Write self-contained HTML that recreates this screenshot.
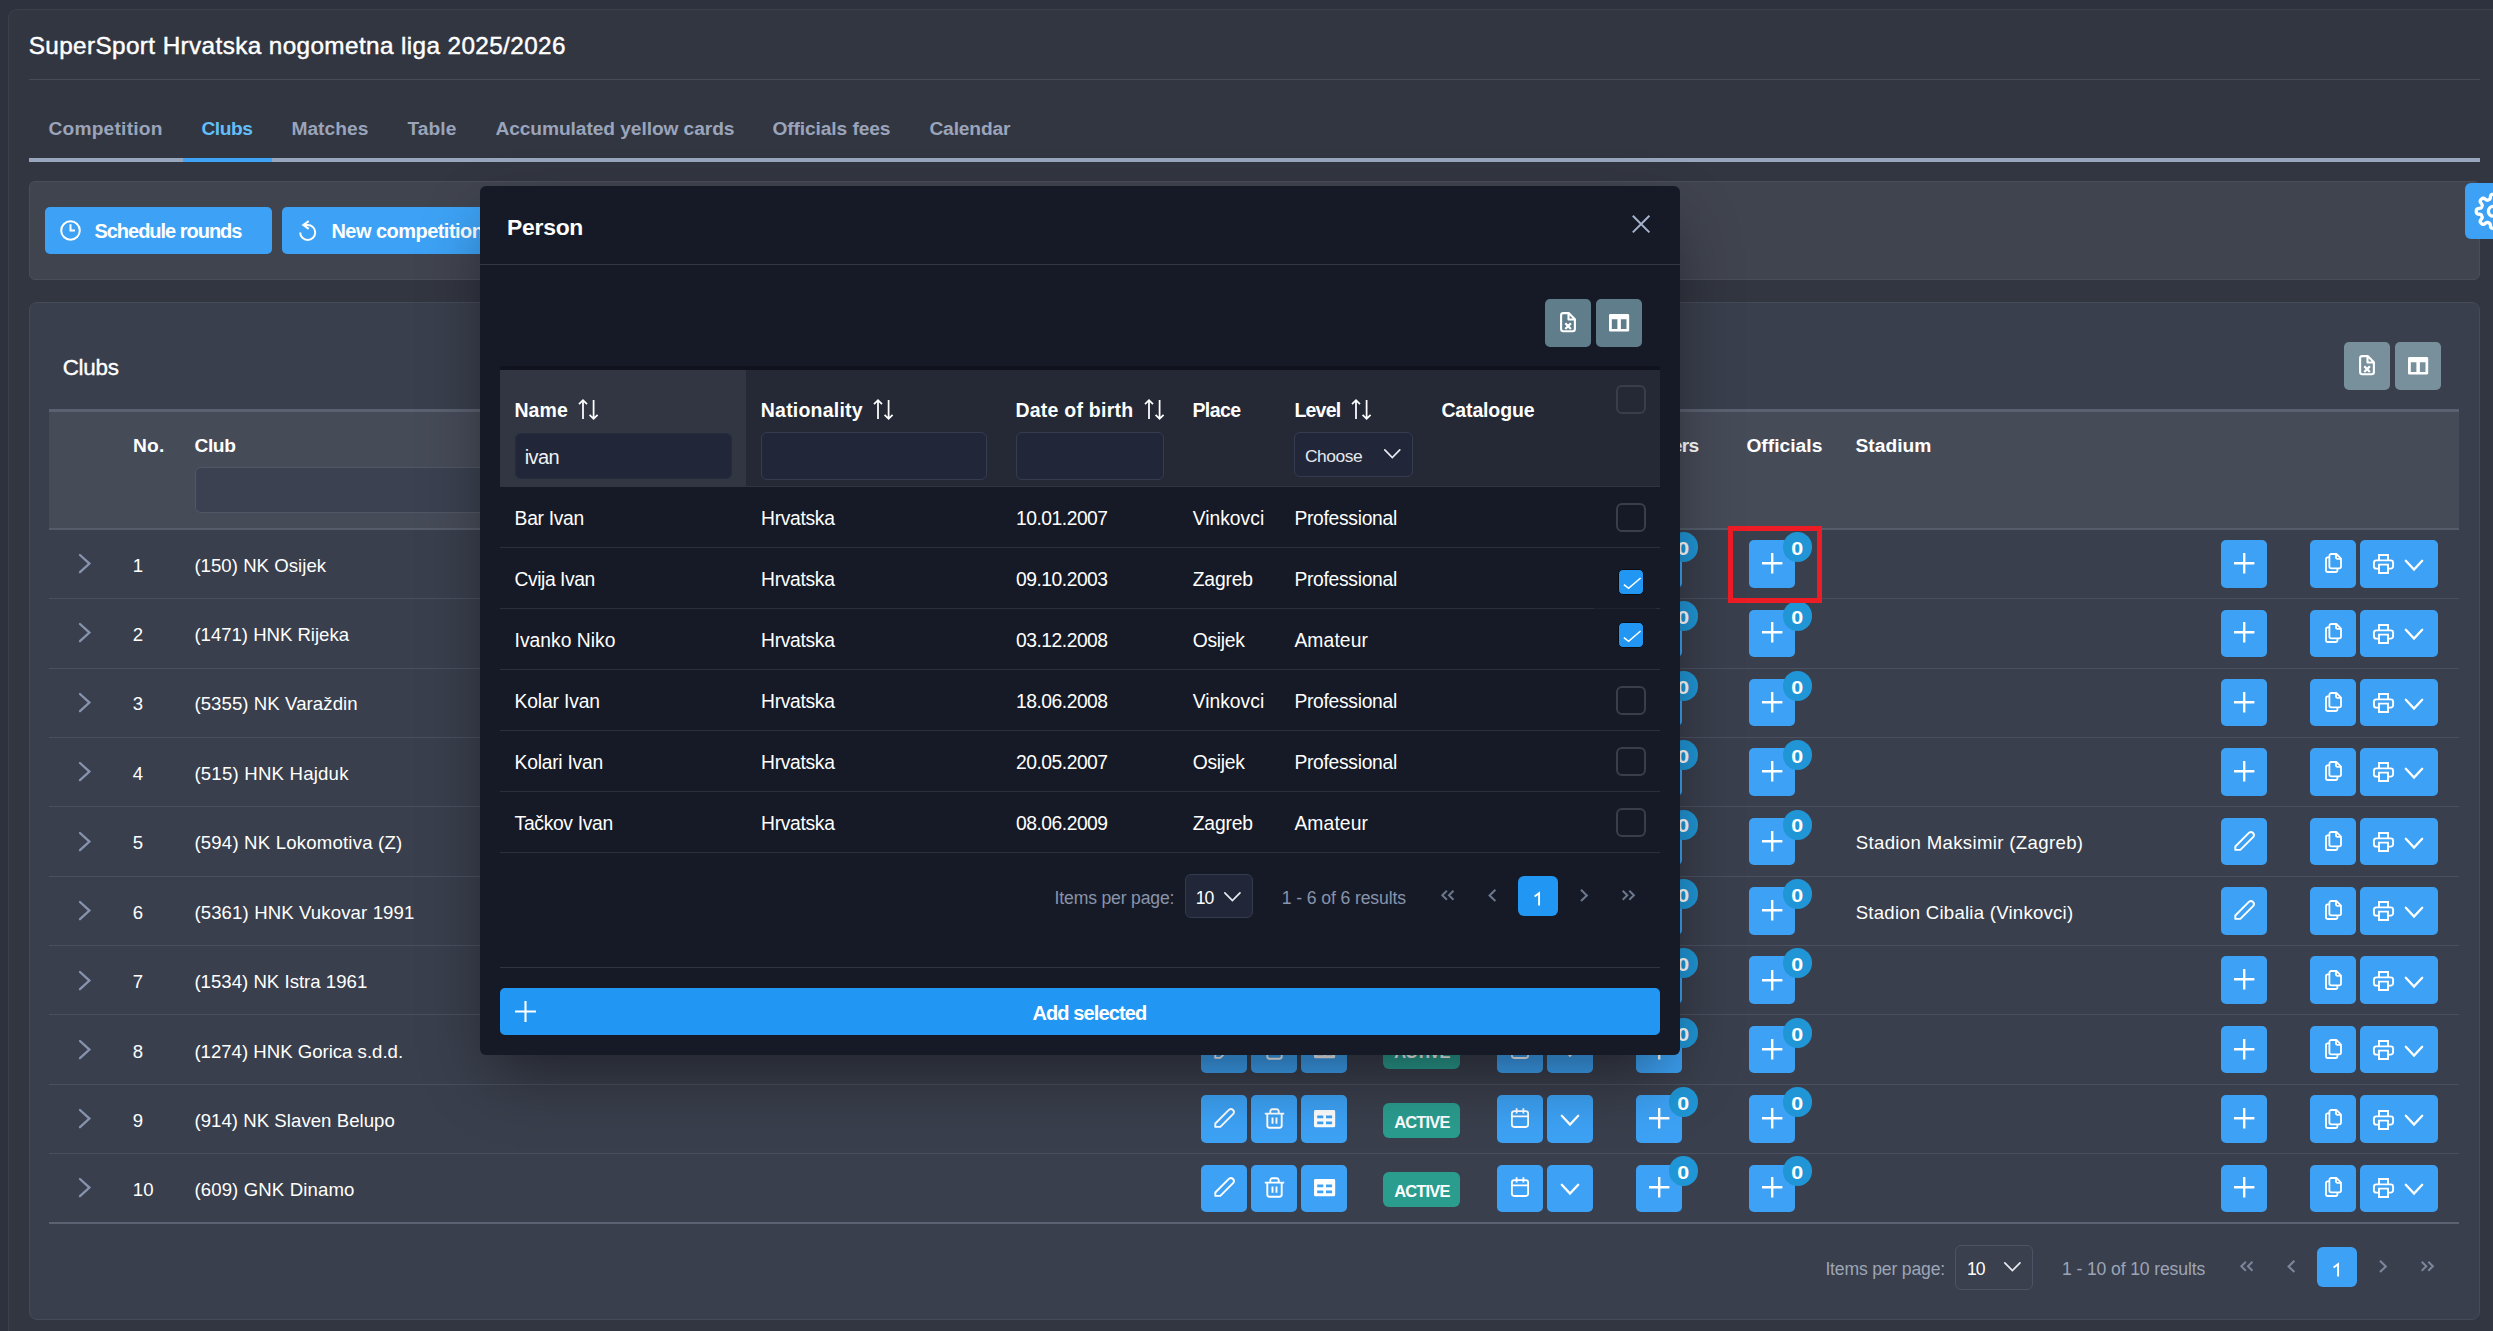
<!DOCTYPE html>
<html><head><meta charset="utf-8"><title>Clubs</title>
<style>
html,body{margin:0;padding:0;}
html{width:2493px;height:1331px;overflow:hidden;}
body{width:2493px;height:1331px;overflow:hidden;background:#2d323e;position:relative;font-family:"Liberation Sans",sans-serif;}
.b{position:absolute;box-sizing:border-box;}
.t{position:absolute;white-space:pre;line-height:1;}
svg{overflow:visible;}
</style></head>
<body>
<div class="b " style="left:8px;top:9px;width:2485px;height:1322px;background:#323641;border-radius:9px 0 0 0;border-top:1px solid #3c404b;border-left:1px solid #3c404b;"></div>
<span class="t" style="left:28.70px;top:33.63px;font-size:24.3px;color:#fff;letter-spacing:0.390px;-webkit-text-stroke:0.45px #fff;">SuperSport Hrvatska nogometna liga 2025/2026</span>
<div class="b " style="left:29px;top:79px;width:2451px;height:1px;background:#454a56;"></div>
<span class="t" style="left:48.40px;top:118.57px;font-size:19.2px;color:#9aa4ba;font-weight:700;letter-spacing:0.216px;">Competition</span>
<span class="t" style="left:201.40px;top:118.57px;font-size:19.2px;color:#62bff9;font-weight:700;letter-spacing:-0.463px;">Clubs</span>
<span class="t" style="left:291.40px;top:118.57px;font-size:19.2px;color:#9aa4ba;font-weight:700;letter-spacing:0.031px;">Matches</span>
<span class="t" style="left:407.40px;top:118.57px;font-size:19.2px;color:#9aa4ba;font-weight:700;letter-spacing:0.059px;">Table</span>
<span class="t" style="left:495.40px;top:118.57px;font-size:19.2px;color:#9aa4ba;font-weight:700;letter-spacing:-0.083px;">Accumulated yellow cards</span>
<span class="t" style="left:772.40px;top:118.57px;font-size:19.2px;color:#9aa4ba;font-weight:700;letter-spacing:-0.104px;">Officials fees</span>
<span class="t" style="left:929.40px;top:118.57px;font-size:19.2px;color:#9aa4ba;font-weight:700;letter-spacing:-0.139px;">Calendar</span>
<div class="b " style="left:29px;top:157.8px;width:2451px;height:4.2px;background:#99a7be;"></div>
<div class="b " style="left:183px;top:157.8px;width:89px;height:4.2px;background:#3fa4f6;"></div>
<div class="b " style="left:29px;top:181px;width:2451px;height:99px;background:#40444f;border-radius:6px;border:1px solid #4a4e59;"></div>
<div class="b " style="left:45px;top:207px;width:227px;height:47px;background:#3da2f5;border-radius:5px;"></div>
<div class="b " style="left:282px;top:207px;width:260px;height:47px;background:#3da2f5;border-radius:5px;"></div>
<svg class="b" style="left:60px;top:219.5px;" width="21" height="21" viewBox="0 0 21 21"><circle cx="10.5" cy="10.5" r="9.3" stroke="#fff" stroke-width="2" fill="none"/><path d="M10.5 4.3V10.5H15" stroke="#fff" stroke-width="2" fill="none"/></svg>
<span class="t" style="left:94.40px;top:221.23px;font-size:20px;color:#fff;font-weight:700;letter-spacing:-1.017px;">Schedule rounds</span>
<svg class="b" style="left:299px;top:219.5px;" width="19" height="21" viewBox="0 0 19 21"><path d="M1.2 12.4A7.5 7.5 0 1 0 8.7 4.9H4.6M9.7 1.1L4.3 5 9.7 8.9" stroke="#fff" stroke-width="2" fill="none"/></svg>
<span class="t" style="left:331.40px;top:221.23px;font-size:20px;color:#fff;font-weight:700;letter-spacing:-0.534px;">New competition</span>
<div class="b " style="left:2465px;top:183px;width:28px;height:56px;background:#3da2f5;border-radius:6px 0 0 6px;"></div>
<svg class="b" style="left:2465px;top:183px;overflow:hidden;" width="28" height="56" viewBox="0 0 28 56"><path d="M45.30 28.30L45.29 28.74L45.25 29.19L45.17 29.63L45.03 30.06L44.75 30.47L44.20 30.82L43.28 31.08L42.16 31.25L41.24 31.41L40.68 31.62L40.36 31.87L40.16 32.15L40.01 32.45L39.88 32.75L39.76 33.05L39.63 33.35L39.52 33.65L39.41 33.96L39.35 34.30L39.40 34.71L39.65 35.25L40.18 36.02L40.85 36.93L41.32 37.76L41.46 38.40L41.37 38.89L41.17 39.29L40.91 39.66L40.63 40.00L40.32 40.32L40.00 40.63L39.66 40.91L39.29 41.17L38.89 41.37L38.40 41.46L37.76 41.32L36.93 40.85L36.02 40.18L35.25 39.65L34.71 39.40L34.30 39.35L33.96 39.41L33.65 39.52L33.35 39.63L33.05 39.76L32.75 39.88L32.45 40.01L32.15 40.16L31.87 40.36L31.62 40.68L31.41 41.24L31.25 42.16L31.08 43.28L30.82 44.20L30.47 44.75L30.06 45.03L29.63 45.17L29.19 45.25L28.74 45.29L28.30 45.30L27.86 45.29L27.41 45.25L26.97 45.17L26.54 45.03L26.13 44.75L25.78 44.20L25.52 43.28L25.35 42.16L25.19 41.24L24.98 40.68L24.73 40.36L24.45 40.16L24.15 40.01L23.85 39.88L23.55 39.76L23.25 39.63L22.95 39.52L22.64 39.41L22.30 39.35L21.89 39.40L21.35 39.65L20.58 40.18L19.67 40.85L18.84 41.32L18.20 41.46L17.71 41.37L17.31 41.17L16.94 40.91L16.60 40.63L16.28 40.32L15.97 40.00L15.69 39.66L15.43 39.29L15.23 38.89L15.14 38.40L15.28 37.76L15.75 36.93L16.42 36.02L16.95 35.25L17.20 34.71L17.25 34.30L17.19 33.96L17.08 33.65L16.97 33.35L16.84 33.05L16.72 32.75L16.59 32.45L16.44 32.15L16.24 31.87L15.92 31.62L15.36 31.41L14.44 31.25L13.32 31.08L12.40 30.82L11.85 30.47L11.57 30.06L11.43 29.63L11.35 29.19L11.31 28.74L11.30 28.30L11.31 27.86L11.35 27.41L11.43 26.97L11.57 26.54L11.85 26.13L12.40 25.78L13.32 25.52L14.44 25.35L15.36 25.19L15.92 24.98L16.24 24.73L16.44 24.45L16.59 24.15L16.72 23.85L16.84 23.55L16.97 23.25L17.08 22.95L17.19 22.64L17.25 22.30L17.20 21.89L16.95 21.35L16.42 20.58L15.75 19.67L15.28 18.84L15.14 18.20L15.23 17.71L15.43 17.31L15.69 16.94L15.97 16.60L16.28 16.28L16.60 15.97L16.94 15.69L17.31 15.43L17.71 15.23L18.20 15.14L18.84 15.28L19.67 15.75L20.58 16.42L21.35 16.95L21.89 17.20L22.30 17.25L22.64 17.19L22.95 17.08L23.25 16.97L23.55 16.84L23.85 16.72L24.15 16.59L24.45 16.44L24.73 16.24L24.98 15.92L25.19 15.36L25.35 14.44L25.52 13.32L25.78 12.40L26.13 11.85L26.54 11.57L26.97 11.43L27.41 11.35L27.86 11.31L28.30 11.30L28.74 11.31L29.19 11.35L29.63 11.43L30.06 11.57L30.47 11.85L30.82 12.40L31.08 13.32L31.25 14.44L31.41 15.36L31.62 15.92L31.87 16.24L32.15 16.44L32.45 16.59L32.75 16.72L33.05 16.84L33.35 16.97L33.65 17.08L33.96 17.19L34.30 17.25L34.71 17.20L35.25 16.95L36.02 16.42L36.93 15.75L37.76 15.28L38.40 15.14L38.89 15.23L39.29 15.43L39.66 15.69L40.00 15.97L40.32 16.28L40.63 16.60L40.91 16.94L41.17 17.31L41.37 17.71L41.46 18.20L41.32 18.84L40.85 19.67L40.18 20.58L39.65 21.35L39.40 21.89L39.35 22.30L39.41 22.64L39.52 22.95L39.63 23.25L39.76 23.55L39.88 23.85L40.01 24.15L40.16 24.45L40.36 24.73L40.68 24.98L41.24 25.19L42.16 25.35L43.28 25.52L44.20 25.78L44.75 26.13L45.03 26.54L45.17 26.97L45.25 27.41L45.29 27.86Z" stroke="#fff" stroke-width="3.3" fill="none" stroke-linejoin="round"/><circle cx="28.3" cy="28.3" r="4.9" stroke="#fff" stroke-width="3.3" fill="none"/></svg>
<div class="b " style="left:29px;top:302px;width:2451px;height:1018px;background:#3a3f4d;border-radius:8px;border:1px solid #454b59;"></div>
<span class="t" style="left:62.70px;top:357.26px;font-size:22.4px;color:#fff;letter-spacing:-0.250px;-webkit-text-stroke:0.35px #fff;">Clubs</span>
<div class="b " style="left:2344px;top:342px;width:46px;height:48px;background:#78909c;border-radius:5px;"></div>
<div class="b " style="left:2395px;top:342px;width:46px;height:48px;background:#78909c;border-radius:5px;"></div>
<svg class="b" style="left:2359px;top:355.0px;" width="16" height="20.4" viewBox="0 0 16 20.4"><path d="M3.3 1.1H8.7L14.9 7.3V17.1a2.2 2.2 0 0 1-2.2 2.2H3.3A2.2 2.2 0 0 1 1.1 17.1V3.3A2.2 2.2 0 0 1 3.3 1.1ZM8.5 1.3V7.5H14.7" stroke="#fff" stroke-width="2.1" fill="none" stroke-linejoin="round"/><path d="M5.3 11.2L10.9 17M10.9 11.2L5.3 17" stroke="#fff" stroke-width="2.3" fill="none"/></svg>
<svg class="b" style="left:2408.1px;top:356.7px;" width="20.2" height="17.6" viewBox="0 0 20.2 17.6"><path fill-rule="evenodd" fill="#fff" d="M1.4 0h17.4a1.4 1.4 0 0 1 1.4 1.4v14.8a1.4 1.4 0 0 1-1.4 1.4H1.4A1.4 1.4 0 0 1 0 16.2V1.4A1.4 1.4 0 0 1 1.4 0ZM2.8 5.3h5.6v9.7H2.8ZM11.9 5.3h5.6v9.7h-5.6Z"/></svg>
<div class="b " style="left:49px;top:409px;width:2410px;height:3px;background:#5b6170;"></div>
<div class="b " style="left:49px;top:412px;width:2410px;height:116px;background:#464b58;"></div>
<div class="b " style="left:49px;top:528.4px;width:2410px;height:1.3px;background:#565c6a;"></div>
<span class="t" style="left:133.00px;top:435.72px;font-size:19.2px;color:#fff;font-weight:700;letter-spacing:0.193px;">No.</span>
<span class="t" style="left:194.40px;top:435.72px;font-size:19.2px;color:#fff;font-weight:700;letter-spacing:-0.360px;">Club</span>
<div class="b " style="left:194.6px;top:467.4px;width:700px;height:45.6px;background:#3b4150;border-radius:6px;border:1px solid #515766;"></div>
<span class="t" style="left:1635.40px;top:435.72px;font-size:19.2px;color:#fff;font-weight:700;letter-spacing:-0.754px;">Players</span>
<span class="t" style="left:1746.40px;top:435.72px;font-size:19.2px;color:#fff;font-weight:700;letter-spacing:0.031px;">Officials</span>
<span class="t" style="left:1855.40px;top:435.72px;font-size:19.2px;color:#fff;font-weight:700;letter-spacing:0.042px;">Stadium</span>
<div class="b " style="left:49px;top:598px;width:2410px;height:1px;background:#4a505e;"></div>
<svg class="b" style="left:78.8px;top:554.0px;" width="11.4" height="19.2" viewBox="0 0 11.4 19.2"><path d="M1 1L10.4 9.6L1 18.2" stroke="#8794b0" stroke-width="2.3" fill="none" stroke-linecap="round" stroke-linejoin="miter"/></svg>
<span class="t" style="left:132.80px;top:557.01px;font-size:18.6px;color:#fff;">1</span>
<span class="t" style="left:194.40px;top:557.01px;font-size:18.6px;color:#fff;letter-spacing:0.031px;">(150) NK Osijek</span>
<div class="b " style="left:1201px;top:540px;width:46px;height:48px;background:#3da2f5;border-radius:5px;"></div>
<svg class="b" style="left:1214.0px;top:552.9px;" width="21" height="20" viewBox="0 0 21 20"><path d="M15.1 1.7A3 3 0 0 1 19.3 5.9L6.3 18.9H1.3V15.5Z" stroke="#fff" stroke-width="1.9" fill="none" stroke-linejoin="round"/></svg>
<div class="b " style="left:1251px;top:540px;width:46px;height:48px;background:#3da2f5;border-radius:5px;"></div>
<svg class="b" style="left:1263.8px;top:552.6px;" width="21" height="21" viewBox="0 0 21 21"><path d="M0.8 5.6H20.2M6.3 5.6V3.2a1.9 1.9 0 0 1 1.9-1.9h4.6a1.9 1.9 0 0 1 1.9 1.9V5.6M3.3 5.6V17.6a2.2 2.2 0 0 0 2.2 2.2h10a2.2 2.2 0 0 0 2.2-2.2V5.6M8.5 9.5V15.8M12.5 9.5V15.8" stroke="#fff" stroke-width="1.9" fill="none" stroke-linecap="butt" stroke-linejoin="round"/></svg>
<div class="b " style="left:1301px;top:540px;width:46px;height:48px;background:#3da2f5;border-radius:5px;"></div>
<svg class="b" style="left:1313.7px;top:554.9px;" width="21.2" height="17.2" viewBox="0 0 21.2 17.2"><path fill-rule="evenodd" fill="#fff" d="M1.5 0h18.2a1.5 1.5 0 0 1 1.5 1.5v14.2a1.5 1.5 0 0 1-1.5 1.5H1.5A1.5 1.5 0 0 1 0 15.7V1.5A1.5 1.5 0 0 1 1.5 0ZM3.2 5.5h6.1v2.7H3.2ZM12 5.5h6.1v2.7H12ZM3.2 11.5h6.1v2.8H3.2ZM12 11.5h6.1v2.8H12Z"/></svg>
<div class="b " style="left:1383px;top:547.9px;width:77px;height:35px;background:#2a9d8f;border-radius:6px;"></div>
<span class="t" style="left:1394.20px;top:558.29px;font-size:16.4px;color:#fff;font-weight:700;letter-spacing:-0.768px;">ACTIVE</span>
<div class="b " style="left:1497px;top:540px;width:46px;height:48px;background:#3da2f5;border-radius:5px;"></div>
<svg class="b" style="left:1511px;top:552.6999999999999px;" width="18" height="20" viewBox="0 0 18 20"><path d="M3.3 3.2h11.4a2.4 2.4 0 0 1 2.4 2.4v11a2.4 2.4 0 0 1-2.4 2.4H3.3A2.4 2.4 0 0 1 .9 16.6v-11A2.4 2.4 0 0 1 3.3 3.2ZM.9 8.4H17.1M5.6 0.3V5.4M12.4 0.3V5.4" stroke="#fff" stroke-width="1.8" fill="none"/></svg>
<div class="b " style="left:1547px;top:540px;width:46px;height:48px;background:#3da2f5;border-radius:5px;"></div>
<svg class="b" style="left:1561.0px;top:560.05px;" width="18" height="10.5" viewBox="0 0 18 10.5"><path d="M0.8 0.8L9.0 9.5L17.2 0.8" stroke="#fff" stroke-width="2.3" fill="none" stroke-linecap="round" stroke-linejoin="miter"/></svg>
<div class="b " style="left:1636px;top:540px;width:46px;height:48px;background:#3da2f5;border-radius:5px;"></div>
<svg class="b" style="left:1649.0px;top:552.9999999999999px;" width="20.4" height="20.4" viewBox="0 0 20.4 20.4"><path d="M10.2 0V20.4M0 10.2H20.4" stroke="#fff" stroke-width="2.4" fill="none"/></svg>
<div class="b " style="left:1668.7px;top:531.9px;width:29.4px;height:30px;background:#2096d6;border-radius:15px;"></div>
<span class="t" style="left:1677.62px;top:538.82px;font-size:19px;color:#fff;font-weight:700;transform:scaleX(1.13);">0</span>
<div class="b " style="left:1749px;top:540px;width:46px;height:48px;background:#3da2f5;border-radius:5px;"></div>
<svg class="b" style="left:1762.3px;top:552.9999999999999px;" width="20.4" height="20.4" viewBox="0 0 20.4 20.4"><path d="M10.2 0V20.4M0 10.2H20.4" stroke="#fff" stroke-width="2.4" fill="none"/></svg>
<div class="b " style="left:1782.8px;top:531.9px;width:29.4px;height:30px;background:#2096d6;border-radius:15px;"></div>
<span class="t" style="left:1791.72px;top:538.82px;font-size:19px;color:#fff;font-weight:700;transform:scaleX(1.13);">0</span>
<div class="b " style="left:2221px;top:540px;width:46px;height:48px;background:#3da2f5;border-radius:5px;"></div>
<svg class="b" style="left:2233.8px;top:552.9px;" width="20.4" height="20.4" viewBox="0 0 20.4 20.4"><path d="M10.2 0V20.4M0 10.2H20.4" stroke="#fff" stroke-width="2.4" fill="none"/></svg>
<div class="b " style="left:2310px;top:540px;width:46px;height:48px;background:#3da2f5;border-radius:5px;"></div>
<svg class="b" style="left:2324.7px;top:553.1px;" width="17" height="20" viewBox="0 0 17 20"><path d="M6.2 1h5.2l4.6 4.6v8a1.8 1.8 0 0 1-1.8 1.8H6.2A1.8 1.8 0 0 1 4.4 13.6V2.8A1.8 1.8 0 0 1 6.2 1ZM11 1v3.4a1.4 1.4 0 0 0 1.4 1.4H16M4.4 4.4H2.8A1.8 1.8 0 0 0 1 6.2V17.2A1.8 1.8 0 0 0 2.8 19H10.6a1.8 1.8 0 0 0 1.8-1.8V15.4" stroke="#fff" stroke-width="1.8" fill="none" stroke-linejoin="round"/></svg>
<div class="b " style="left:2360px;top:540px;width:78px;height:48px;background:#3da2f5;border-radius:5px;"></div>
<svg class="b" style="left:2372.9px;top:554.1999999999999px;" width="21" height="20" viewBox="0 0 21 20"><path d="M6 6.4V1h9v5.4M6 14.6H3.3A2.4 2.4 0 0 1 .9 12.2V8.8A2.4 2.4 0 0 1 3.3 6.4h14.4a2.4 2.4 0 0 1 2.4 2.4v3.4a2.4 2.4 0 0 1-2.4 2.4H15M6 10.6h9V19H6Z" stroke="#fff" stroke-width="1.9" fill="none" stroke-linejoin="miter"/></svg>
<svg class="b" style="left:2405.0px;top:559.9499999999999px;" width="18" height="10.5" viewBox="0 0 18 10.5"><path d="M0.8 0.8L9.0 9.5L17.2 0.8" stroke="#fff" stroke-width="2.3" fill="none" stroke-linecap="round" stroke-linejoin="miter"/></svg>
<div class="b " style="left:49px;top:668px;width:2410px;height:1px;background:#4a505e;"></div>
<svg class="b" style="left:78.8px;top:623.43px;" width="11.4" height="19.2" viewBox="0 0 11.4 19.2"><path d="M1 1L10.4 9.6L1 18.2" stroke="#8794b0" stroke-width="2.3" fill="none" stroke-linecap="round" stroke-linejoin="miter"/></svg>
<span class="t" style="left:132.80px;top:626.44px;font-size:18.6px;color:#fff;">2</span>
<span class="t" style="left:194.40px;top:626.44px;font-size:18.6px;color:#fff;letter-spacing:-0.024px;">(1471) HNK Rijeka</span>
<div class="b " style="left:1201px;top:610px;width:46px;height:47px;background:#3da2f5;border-radius:5px;"></div>
<svg class="b" style="left:1214.0px;top:622.3299999999999px;" width="21" height="20" viewBox="0 0 21 20"><path d="M15.1 1.7A3 3 0 0 1 19.3 5.9L6.3 18.9H1.3V15.5Z" stroke="#fff" stroke-width="1.9" fill="none" stroke-linejoin="round"/></svg>
<div class="b " style="left:1251px;top:610px;width:46px;height:47px;background:#3da2f5;border-radius:5px;"></div>
<svg class="b" style="left:1263.8px;top:622.03px;" width="21" height="21" viewBox="0 0 21 21"><path d="M0.8 5.6H20.2M6.3 5.6V3.2a1.9 1.9 0 0 1 1.9-1.9h4.6a1.9 1.9 0 0 1 1.9 1.9V5.6M3.3 5.6V17.6a2.2 2.2 0 0 0 2.2 2.2h10a2.2 2.2 0 0 0 2.2-2.2V5.6M8.5 9.5V15.8M12.5 9.5V15.8" stroke="#fff" stroke-width="1.9" fill="none" stroke-linecap="butt" stroke-linejoin="round"/></svg>
<div class="b " style="left:1301px;top:610px;width:46px;height:47px;background:#3da2f5;border-radius:5px;"></div>
<svg class="b" style="left:1313.7px;top:624.3299999999999px;" width="21.2" height="17.2" viewBox="0 0 21.2 17.2"><path fill-rule="evenodd" fill="#fff" d="M1.5 0h18.2a1.5 1.5 0 0 1 1.5 1.5v14.2a1.5 1.5 0 0 1-1.5 1.5H1.5A1.5 1.5 0 0 1 0 15.7V1.5A1.5 1.5 0 0 1 1.5 0ZM3.2 5.5h6.1v2.7H3.2ZM12 5.5h6.1v2.7H12ZM3.2 11.5h6.1v2.8H3.2ZM12 11.5h6.1v2.8H12Z"/></svg>
<div class="b " style="left:1383px;top:617.3299999999999px;width:77px;height:35px;background:#2a9d8f;border-radius:6px;"></div>
<span class="t" style="left:1394.20px;top:627.72px;font-size:16.4px;color:#fff;font-weight:700;letter-spacing:-0.768px;">ACTIVE</span>
<div class="b " style="left:1497px;top:610px;width:46px;height:47px;background:#3da2f5;border-radius:5px;"></div>
<svg class="b" style="left:1511px;top:622.1299999999999px;" width="18" height="20" viewBox="0 0 18 20"><path d="M3.3 3.2h11.4a2.4 2.4 0 0 1 2.4 2.4v11a2.4 2.4 0 0 1-2.4 2.4H3.3A2.4 2.4 0 0 1 .9 16.6v-11A2.4 2.4 0 0 1 3.3 3.2ZM.9 8.4H17.1M5.6 0.3V5.4M12.4 0.3V5.4" stroke="#fff" stroke-width="1.8" fill="none"/></svg>
<div class="b " style="left:1547px;top:610px;width:46px;height:47px;background:#3da2f5;border-radius:5px;"></div>
<svg class="b" style="left:1561.0px;top:629.4799999999999px;" width="18" height="10.5" viewBox="0 0 18 10.5"><path d="M0.8 0.8L9.0 9.5L17.2 0.8" stroke="#fff" stroke-width="2.3" fill="none" stroke-linecap="round" stroke-linejoin="miter"/></svg>
<div class="b " style="left:1636px;top:610px;width:46px;height:47px;background:#3da2f5;border-radius:5px;"></div>
<svg class="b" style="left:1649.0px;top:622.4299999999998px;" width="20.4" height="20.4" viewBox="0 0 20.4 20.4"><path d="M10.2 0V20.4M0 10.2H20.4" stroke="#fff" stroke-width="2.4" fill="none"/></svg>
<div class="b " style="left:1668.7px;top:601.3299999999999px;width:29.4px;height:30px;background:#2096d6;border-radius:15px;"></div>
<span class="t" style="left:1677.62px;top:608.25px;font-size:19px;color:#fff;font-weight:700;transform:scaleX(1.13);">0</span>
<div class="b " style="left:1749px;top:610px;width:46px;height:47px;background:#3da2f5;border-radius:5px;"></div>
<svg class="b" style="left:1762.3px;top:622.4299999999998px;" width="20.4" height="20.4" viewBox="0 0 20.4 20.4"><path d="M10.2 0V20.4M0 10.2H20.4" stroke="#fff" stroke-width="2.4" fill="none"/></svg>
<div class="b " style="left:1782.8px;top:601.3299999999999px;width:29.4px;height:30px;background:#2096d6;border-radius:15px;"></div>
<span class="t" style="left:1791.72px;top:608.25px;font-size:19px;color:#fff;font-weight:700;transform:scaleX(1.13);">0</span>
<div class="b " style="left:2221px;top:610px;width:46px;height:47px;background:#3da2f5;border-radius:5px;"></div>
<svg class="b" style="left:2233.8px;top:622.3299999999999px;" width="20.4" height="20.4" viewBox="0 0 20.4 20.4"><path d="M10.2 0V20.4M0 10.2H20.4" stroke="#fff" stroke-width="2.4" fill="none"/></svg>
<div class="b " style="left:2310px;top:610px;width:46px;height:47px;background:#3da2f5;border-radius:5px;"></div>
<svg class="b" style="left:2324.7px;top:622.53px;" width="17" height="20" viewBox="0 0 17 20"><path d="M6.2 1h5.2l4.6 4.6v8a1.8 1.8 0 0 1-1.8 1.8H6.2A1.8 1.8 0 0 1 4.4 13.6V2.8A1.8 1.8 0 0 1 6.2 1ZM11 1v3.4a1.4 1.4 0 0 0 1.4 1.4H16M4.4 4.4H2.8A1.8 1.8 0 0 0 1 6.2V17.2A1.8 1.8 0 0 0 2.8 19H10.6a1.8 1.8 0 0 0 1.8-1.8V15.4" stroke="#fff" stroke-width="1.8" fill="none" stroke-linejoin="round"/></svg>
<div class="b " style="left:2360px;top:610px;width:78px;height:47px;background:#3da2f5;border-radius:5px;"></div>
<svg class="b" style="left:2372.9px;top:623.6299999999999px;" width="21" height="20" viewBox="0 0 21 20"><path d="M6 6.4V1h9v5.4M6 14.6H3.3A2.4 2.4 0 0 1 .9 12.2V8.8A2.4 2.4 0 0 1 3.3 6.4h14.4a2.4 2.4 0 0 1 2.4 2.4v3.4a2.4 2.4 0 0 1-2.4 2.4H15M6 10.6h9V19H6Z" stroke="#fff" stroke-width="1.9" fill="none" stroke-linejoin="miter"/></svg>
<svg class="b" style="left:2405.0px;top:629.3799999999999px;" width="18" height="10.5" viewBox="0 0 18 10.5"><path d="M0.8 0.8L9.0 9.5L17.2 0.8" stroke="#fff" stroke-width="2.3" fill="none" stroke-linecap="round" stroke-linejoin="miter"/></svg>
<div class="b " style="left:49px;top:737px;width:2410px;height:1px;background:#4a505e;"></div>
<svg class="b" style="left:78.8px;top:692.86px;" width="11.4" height="19.2" viewBox="0 0 11.4 19.2"><path d="M1 1L10.4 9.6L1 18.2" stroke="#8794b0" stroke-width="2.3" fill="none" stroke-linecap="round" stroke-linejoin="miter"/></svg>
<span class="t" style="left:132.80px;top:694.87px;font-size:18.6px;color:#fff;">3</span>
<span class="t" style="left:194.40px;top:694.87px;font-size:18.6px;color:#fff;letter-spacing:0.077px;">(5355) NK Varaždin</span>
<div class="b " style="left:1201px;top:679px;width:46px;height:47px;background:#3da2f5;border-radius:5px;"></div>
<svg class="b" style="left:1214.0px;top:691.76px;" width="21" height="20" viewBox="0 0 21 20"><path d="M15.1 1.7A3 3 0 0 1 19.3 5.9L6.3 18.9H1.3V15.5Z" stroke="#fff" stroke-width="1.9" fill="none" stroke-linejoin="round"/></svg>
<div class="b " style="left:1251px;top:679px;width:46px;height:47px;background:#3da2f5;border-radius:5px;"></div>
<svg class="b" style="left:1263.8px;top:691.46px;" width="21" height="21" viewBox="0 0 21 21"><path d="M0.8 5.6H20.2M6.3 5.6V3.2a1.9 1.9 0 0 1 1.9-1.9h4.6a1.9 1.9 0 0 1 1.9 1.9V5.6M3.3 5.6V17.6a2.2 2.2 0 0 0 2.2 2.2h10a2.2 2.2 0 0 0 2.2-2.2V5.6M8.5 9.5V15.8M12.5 9.5V15.8" stroke="#fff" stroke-width="1.9" fill="none" stroke-linecap="butt" stroke-linejoin="round"/></svg>
<div class="b " style="left:1301px;top:679px;width:46px;height:47px;background:#3da2f5;border-radius:5px;"></div>
<svg class="b" style="left:1313.7px;top:693.76px;" width="21.2" height="17.2" viewBox="0 0 21.2 17.2"><path fill-rule="evenodd" fill="#fff" d="M1.5 0h18.2a1.5 1.5 0 0 1 1.5 1.5v14.2a1.5 1.5 0 0 1-1.5 1.5H1.5A1.5 1.5 0 0 1 0 15.7V1.5A1.5 1.5 0 0 1 1.5 0ZM3.2 5.5h6.1v2.7H3.2ZM12 5.5h6.1v2.7H12ZM3.2 11.5h6.1v2.8H3.2ZM12 11.5h6.1v2.8H12Z"/></svg>
<div class="b " style="left:1383px;top:686.76px;width:77px;height:35px;background:#2a9d8f;border-radius:6px;"></div>
<span class="t" style="left:1394.20px;top:697.15px;font-size:16.4px;color:#fff;font-weight:700;letter-spacing:-0.768px;">ACTIVE</span>
<div class="b " style="left:1497px;top:679px;width:46px;height:47px;background:#3da2f5;border-radius:5px;"></div>
<svg class="b" style="left:1511px;top:691.56px;" width="18" height="20" viewBox="0 0 18 20"><path d="M3.3 3.2h11.4a2.4 2.4 0 0 1 2.4 2.4v11a2.4 2.4 0 0 1-2.4 2.4H3.3A2.4 2.4 0 0 1 .9 16.6v-11A2.4 2.4 0 0 1 3.3 3.2ZM.9 8.4H17.1M5.6 0.3V5.4M12.4 0.3V5.4" stroke="#fff" stroke-width="1.8" fill="none"/></svg>
<div class="b " style="left:1547px;top:679px;width:46px;height:47px;background:#3da2f5;border-radius:5px;"></div>
<svg class="b" style="left:1561.0px;top:698.91px;" width="18" height="10.5" viewBox="0 0 18 10.5"><path d="M0.8 0.8L9.0 9.5L17.2 0.8" stroke="#fff" stroke-width="2.3" fill="none" stroke-linecap="round" stroke-linejoin="miter"/></svg>
<div class="b " style="left:1636px;top:679px;width:46px;height:47px;background:#3da2f5;border-radius:5px;"></div>
<svg class="b" style="left:1649.0px;top:691.8599999999999px;" width="20.4" height="20.4" viewBox="0 0 20.4 20.4"><path d="M10.2 0V20.4M0 10.2H20.4" stroke="#fff" stroke-width="2.4" fill="none"/></svg>
<div class="b " style="left:1668.7px;top:670.76px;width:29.4px;height:30px;background:#2096d6;border-radius:15px;"></div>
<span class="t" style="left:1677.62px;top:677.68px;font-size:19px;color:#fff;font-weight:700;transform:scaleX(1.13);">0</span>
<div class="b " style="left:1749px;top:679px;width:46px;height:47px;background:#3da2f5;border-radius:5px;"></div>
<svg class="b" style="left:1762.3px;top:691.8599999999999px;" width="20.4" height="20.4" viewBox="0 0 20.4 20.4"><path d="M10.2 0V20.4M0 10.2H20.4" stroke="#fff" stroke-width="2.4" fill="none"/></svg>
<div class="b " style="left:1782.8px;top:670.76px;width:29.4px;height:30px;background:#2096d6;border-radius:15px;"></div>
<span class="t" style="left:1791.72px;top:677.68px;font-size:19px;color:#fff;font-weight:700;transform:scaleX(1.13);">0</span>
<div class="b " style="left:2221px;top:679px;width:46px;height:47px;background:#3da2f5;border-radius:5px;"></div>
<svg class="b" style="left:2233.8px;top:691.76px;" width="20.4" height="20.4" viewBox="0 0 20.4 20.4"><path d="M10.2 0V20.4M0 10.2H20.4" stroke="#fff" stroke-width="2.4" fill="none"/></svg>
<div class="b " style="left:2310px;top:679px;width:46px;height:47px;background:#3da2f5;border-radius:5px;"></div>
<svg class="b" style="left:2324.7px;top:691.96px;" width="17" height="20" viewBox="0 0 17 20"><path d="M6.2 1h5.2l4.6 4.6v8a1.8 1.8 0 0 1-1.8 1.8H6.2A1.8 1.8 0 0 1 4.4 13.6V2.8A1.8 1.8 0 0 1 6.2 1ZM11 1v3.4a1.4 1.4 0 0 0 1.4 1.4H16M4.4 4.4H2.8A1.8 1.8 0 0 0 1 6.2V17.2A1.8 1.8 0 0 0 2.8 19H10.6a1.8 1.8 0 0 0 1.8-1.8V15.4" stroke="#fff" stroke-width="1.8" fill="none" stroke-linejoin="round"/></svg>
<div class="b " style="left:2360px;top:679px;width:78px;height:47px;background:#3da2f5;border-radius:5px;"></div>
<svg class="b" style="left:2372.9px;top:693.06px;" width="21" height="20" viewBox="0 0 21 20"><path d="M6 6.4V1h9v5.4M6 14.6H3.3A2.4 2.4 0 0 1 .9 12.2V8.8A2.4 2.4 0 0 1 3.3 6.4h14.4a2.4 2.4 0 0 1 2.4 2.4v3.4a2.4 2.4 0 0 1-2.4 2.4H15M6 10.6h9V19H6Z" stroke="#fff" stroke-width="1.9" fill="none" stroke-linejoin="miter"/></svg>
<svg class="b" style="left:2405.0px;top:698.81px;" width="18" height="10.5" viewBox="0 0 18 10.5"><path d="M0.8 0.8L9.0 9.5L17.2 0.8" stroke="#fff" stroke-width="2.3" fill="none" stroke-linecap="round" stroke-linejoin="miter"/></svg>
<div class="b " style="left:49px;top:806px;width:2410px;height:1px;background:#4a505e;"></div>
<svg class="b" style="left:78.8px;top:762.2900000000001px;" width="11.4" height="19.2" viewBox="0 0 11.4 19.2"><path d="M1 1L10.4 9.6L1 18.2" stroke="#8794b0" stroke-width="2.3" fill="none" stroke-linecap="round" stroke-linejoin="miter"/></svg>
<span class="t" style="left:132.80px;top:765.30px;font-size:18.6px;color:#fff;">4</span>
<span class="t" style="left:194.40px;top:765.30px;font-size:18.6px;color:#fff;letter-spacing:0.214px;">(515) HNK Hajduk</span>
<div class="b " style="left:1201px;top:748px;width:46px;height:48px;background:#3da2f5;border-radius:5px;"></div>
<svg class="b" style="left:1214.0px;top:761.19px;" width="21" height="20" viewBox="0 0 21 20"><path d="M15.1 1.7A3 3 0 0 1 19.3 5.9L6.3 18.9H1.3V15.5Z" stroke="#fff" stroke-width="1.9" fill="none" stroke-linejoin="round"/></svg>
<div class="b " style="left:1251px;top:748px;width:46px;height:48px;background:#3da2f5;border-radius:5px;"></div>
<svg class="b" style="left:1263.8px;top:760.8900000000001px;" width="21" height="21" viewBox="0 0 21 21"><path d="M0.8 5.6H20.2M6.3 5.6V3.2a1.9 1.9 0 0 1 1.9-1.9h4.6a1.9 1.9 0 0 1 1.9 1.9V5.6M3.3 5.6V17.6a2.2 2.2 0 0 0 2.2 2.2h10a2.2 2.2 0 0 0 2.2-2.2V5.6M8.5 9.5V15.8M12.5 9.5V15.8" stroke="#fff" stroke-width="1.9" fill="none" stroke-linecap="butt" stroke-linejoin="round"/></svg>
<div class="b " style="left:1301px;top:748px;width:46px;height:48px;background:#3da2f5;border-radius:5px;"></div>
<svg class="b" style="left:1313.7px;top:763.19px;" width="21.2" height="17.2" viewBox="0 0 21.2 17.2"><path fill-rule="evenodd" fill="#fff" d="M1.5 0h18.2a1.5 1.5 0 0 1 1.5 1.5v14.2a1.5 1.5 0 0 1-1.5 1.5H1.5A1.5 1.5 0 0 1 0 15.7V1.5A1.5 1.5 0 0 1 1.5 0ZM3.2 5.5h6.1v2.7H3.2ZM12 5.5h6.1v2.7H12ZM3.2 11.5h6.1v2.8H3.2ZM12 11.5h6.1v2.8H12Z"/></svg>
<div class="b " style="left:1383px;top:756.19px;width:77px;height:35px;background:#2a9d8f;border-radius:6px;"></div>
<span class="t" style="left:1394.20px;top:766.58px;font-size:16.4px;color:#fff;font-weight:700;letter-spacing:-0.768px;">ACTIVE</span>
<div class="b " style="left:1497px;top:748px;width:46px;height:48px;background:#3da2f5;border-radius:5px;"></div>
<svg class="b" style="left:1511px;top:760.99px;" width="18" height="20" viewBox="0 0 18 20"><path d="M3.3 3.2h11.4a2.4 2.4 0 0 1 2.4 2.4v11a2.4 2.4 0 0 1-2.4 2.4H3.3A2.4 2.4 0 0 1 .9 16.6v-11A2.4 2.4 0 0 1 3.3 3.2ZM.9 8.4H17.1M5.6 0.3V5.4M12.4 0.3V5.4" stroke="#fff" stroke-width="1.8" fill="none"/></svg>
<div class="b " style="left:1547px;top:748px;width:46px;height:48px;background:#3da2f5;border-radius:5px;"></div>
<svg class="b" style="left:1561.0px;top:768.34px;" width="18" height="10.5" viewBox="0 0 18 10.5"><path d="M0.8 0.8L9.0 9.5L17.2 0.8" stroke="#fff" stroke-width="2.3" fill="none" stroke-linecap="round" stroke-linejoin="miter"/></svg>
<div class="b " style="left:1636px;top:748px;width:46px;height:48px;background:#3da2f5;border-radius:5px;"></div>
<svg class="b" style="left:1649.0px;top:761.29px;" width="20.4" height="20.4" viewBox="0 0 20.4 20.4"><path d="M10.2 0V20.4M0 10.2H20.4" stroke="#fff" stroke-width="2.4" fill="none"/></svg>
<div class="b " style="left:1668.7px;top:740.19px;width:29.4px;height:30px;background:#2096d6;border-radius:15px;"></div>
<span class="t" style="left:1677.62px;top:747.11px;font-size:19px;color:#fff;font-weight:700;transform:scaleX(1.13);">0</span>
<div class="b " style="left:1749px;top:748px;width:46px;height:48px;background:#3da2f5;border-radius:5px;"></div>
<svg class="b" style="left:1762.3px;top:761.29px;" width="20.4" height="20.4" viewBox="0 0 20.4 20.4"><path d="M10.2 0V20.4M0 10.2H20.4" stroke="#fff" stroke-width="2.4" fill="none"/></svg>
<div class="b " style="left:1782.8px;top:740.19px;width:29.4px;height:30px;background:#2096d6;border-radius:15px;"></div>
<span class="t" style="left:1791.72px;top:747.11px;font-size:19px;color:#fff;font-weight:700;transform:scaleX(1.13);">0</span>
<div class="b " style="left:2221px;top:748px;width:46px;height:48px;background:#3da2f5;border-radius:5px;"></div>
<svg class="b" style="left:2233.8px;top:761.19px;" width="20.4" height="20.4" viewBox="0 0 20.4 20.4"><path d="M10.2 0V20.4M0 10.2H20.4" stroke="#fff" stroke-width="2.4" fill="none"/></svg>
<div class="b " style="left:2310px;top:748px;width:46px;height:48px;background:#3da2f5;border-radius:5px;"></div>
<svg class="b" style="left:2324.7px;top:761.3900000000001px;" width="17" height="20" viewBox="0 0 17 20"><path d="M6.2 1h5.2l4.6 4.6v8a1.8 1.8 0 0 1-1.8 1.8H6.2A1.8 1.8 0 0 1 4.4 13.6V2.8A1.8 1.8 0 0 1 6.2 1ZM11 1v3.4a1.4 1.4 0 0 0 1.4 1.4H16M4.4 4.4H2.8A1.8 1.8 0 0 0 1 6.2V17.2A1.8 1.8 0 0 0 2.8 19H10.6a1.8 1.8 0 0 0 1.8-1.8V15.4" stroke="#fff" stroke-width="1.8" fill="none" stroke-linejoin="round"/></svg>
<div class="b " style="left:2360px;top:748px;width:78px;height:48px;background:#3da2f5;border-radius:5px;"></div>
<svg class="b" style="left:2372.9px;top:762.49px;" width="21" height="20" viewBox="0 0 21 20"><path d="M6 6.4V1h9v5.4M6 14.6H3.3A2.4 2.4 0 0 1 .9 12.2V8.8A2.4 2.4 0 0 1 3.3 6.4h14.4a2.4 2.4 0 0 1 2.4 2.4v3.4a2.4 2.4 0 0 1-2.4 2.4H15M6 10.6h9V19H6Z" stroke="#fff" stroke-width="1.9" fill="none" stroke-linejoin="miter"/></svg>
<svg class="b" style="left:2405.0px;top:768.24px;" width="18" height="10.5" viewBox="0 0 18 10.5"><path d="M0.8 0.8L9.0 9.5L17.2 0.8" stroke="#fff" stroke-width="2.3" fill="none" stroke-linecap="round" stroke-linejoin="miter"/></svg>
<div class="b " style="left:49px;top:876px;width:2410px;height:1px;background:#4a505e;"></div>
<svg class="b" style="left:78.8px;top:831.72px;" width="11.4" height="19.2" viewBox="0 0 11.4 19.2"><path d="M1 1L10.4 9.6L1 18.2" stroke="#8794b0" stroke-width="2.3" fill="none" stroke-linecap="round" stroke-linejoin="miter"/></svg>
<span class="t" style="left:132.80px;top:833.73px;font-size:18.6px;color:#fff;">5</span>
<span class="t" style="left:194.40px;top:833.73px;font-size:18.6px;color:#fff;letter-spacing:0.193px;">(594) NK Lokomotiva (Z)</span>
<div class="b " style="left:1201px;top:818px;width:46px;height:47px;background:#3da2f5;border-radius:5px;"></div>
<svg class="b" style="left:1214.0px;top:830.62px;" width="21" height="20" viewBox="0 0 21 20"><path d="M15.1 1.7A3 3 0 0 1 19.3 5.9L6.3 18.9H1.3V15.5Z" stroke="#fff" stroke-width="1.9" fill="none" stroke-linejoin="round"/></svg>
<div class="b " style="left:1251px;top:818px;width:46px;height:47px;background:#3da2f5;border-radius:5px;"></div>
<svg class="b" style="left:1263.8px;top:830.32px;" width="21" height="21" viewBox="0 0 21 21"><path d="M0.8 5.6H20.2M6.3 5.6V3.2a1.9 1.9 0 0 1 1.9-1.9h4.6a1.9 1.9 0 0 1 1.9 1.9V5.6M3.3 5.6V17.6a2.2 2.2 0 0 0 2.2 2.2h10a2.2 2.2 0 0 0 2.2-2.2V5.6M8.5 9.5V15.8M12.5 9.5V15.8" stroke="#fff" stroke-width="1.9" fill="none" stroke-linecap="butt" stroke-linejoin="round"/></svg>
<div class="b " style="left:1301px;top:818px;width:46px;height:47px;background:#3da2f5;border-radius:5px;"></div>
<svg class="b" style="left:1313.7px;top:832.62px;" width="21.2" height="17.2" viewBox="0 0 21.2 17.2"><path fill-rule="evenodd" fill="#fff" d="M1.5 0h18.2a1.5 1.5 0 0 1 1.5 1.5v14.2a1.5 1.5 0 0 1-1.5 1.5H1.5A1.5 1.5 0 0 1 0 15.7V1.5A1.5 1.5 0 0 1 1.5 0ZM3.2 5.5h6.1v2.7H3.2ZM12 5.5h6.1v2.7H12ZM3.2 11.5h6.1v2.8H3.2ZM12 11.5h6.1v2.8H12Z"/></svg>
<div class="b " style="left:1383px;top:825.62px;width:77px;height:35px;background:#2a9d8f;border-radius:6px;"></div>
<span class="t" style="left:1394.20px;top:836.01px;font-size:16.4px;color:#fff;font-weight:700;letter-spacing:-0.768px;">ACTIVE</span>
<div class="b " style="left:1497px;top:818px;width:46px;height:47px;background:#3da2f5;border-radius:5px;"></div>
<svg class="b" style="left:1511px;top:830.42px;" width="18" height="20" viewBox="0 0 18 20"><path d="M3.3 3.2h11.4a2.4 2.4 0 0 1 2.4 2.4v11a2.4 2.4 0 0 1-2.4 2.4H3.3A2.4 2.4 0 0 1 .9 16.6v-11A2.4 2.4 0 0 1 3.3 3.2ZM.9 8.4H17.1M5.6 0.3V5.4M12.4 0.3V5.4" stroke="#fff" stroke-width="1.8" fill="none"/></svg>
<div class="b " style="left:1547px;top:818px;width:46px;height:47px;background:#3da2f5;border-radius:5px;"></div>
<svg class="b" style="left:1561.0px;top:837.77px;" width="18" height="10.5" viewBox="0 0 18 10.5"><path d="M0.8 0.8L9.0 9.5L17.2 0.8" stroke="#fff" stroke-width="2.3" fill="none" stroke-linecap="round" stroke-linejoin="miter"/></svg>
<div class="b " style="left:1636px;top:818px;width:46px;height:47px;background:#3da2f5;border-radius:5px;"></div>
<svg class="b" style="left:1649.0px;top:830.7199999999999px;" width="20.4" height="20.4" viewBox="0 0 20.4 20.4"><path d="M10.2 0V20.4M0 10.2H20.4" stroke="#fff" stroke-width="2.4" fill="none"/></svg>
<div class="b " style="left:1668.7px;top:809.62px;width:29.4px;height:30px;background:#2096d6;border-radius:15px;"></div>
<span class="t" style="left:1677.62px;top:815.54px;font-size:19px;color:#fff;font-weight:700;transform:scaleX(1.13);">0</span>
<div class="b " style="left:1749px;top:818px;width:46px;height:47px;background:#3da2f5;border-radius:5px;"></div>
<svg class="b" style="left:1762.3px;top:830.7199999999999px;" width="20.4" height="20.4" viewBox="0 0 20.4 20.4"><path d="M10.2 0V20.4M0 10.2H20.4" stroke="#fff" stroke-width="2.4" fill="none"/></svg>
<div class="b " style="left:1782.8px;top:809.62px;width:29.4px;height:30px;background:#2096d6;border-radius:15px;"></div>
<span class="t" style="left:1791.72px;top:815.54px;font-size:19px;color:#fff;font-weight:700;transform:scaleX(1.13);">0</span>
<span class="t" style="left:1855.70px;top:833.73px;font-size:18.6px;color:#fff;letter-spacing:0.346px;">Stadion Maksimir (Zagreb)</span>
<div class="b " style="left:2221px;top:818px;width:46px;height:47px;background:#3da2f5;border-radius:5px;"></div>
<svg class="b" style="left:2233.8px;top:830.62px;" width="21" height="20" viewBox="0 0 21 20"><path d="M15.1 1.7A3 3 0 0 1 19.3 5.9L6.3 18.9H1.3V15.5Z" stroke="#fff" stroke-width="1.9" fill="none" stroke-linejoin="round"/></svg>
<div class="b " style="left:2310px;top:818px;width:46px;height:47px;background:#3da2f5;border-radius:5px;"></div>
<svg class="b" style="left:2324.7px;top:830.82px;" width="17" height="20" viewBox="0 0 17 20"><path d="M6.2 1h5.2l4.6 4.6v8a1.8 1.8 0 0 1-1.8 1.8H6.2A1.8 1.8 0 0 1 4.4 13.6V2.8A1.8 1.8 0 0 1 6.2 1ZM11 1v3.4a1.4 1.4 0 0 0 1.4 1.4H16M4.4 4.4H2.8A1.8 1.8 0 0 0 1 6.2V17.2A1.8 1.8 0 0 0 2.8 19H10.6a1.8 1.8 0 0 0 1.8-1.8V15.4" stroke="#fff" stroke-width="1.8" fill="none" stroke-linejoin="round"/></svg>
<div class="b " style="left:2360px;top:818px;width:78px;height:47px;background:#3da2f5;border-radius:5px;"></div>
<svg class="b" style="left:2372.9px;top:831.92px;" width="21" height="20" viewBox="0 0 21 20"><path d="M6 6.4V1h9v5.4M6 14.6H3.3A2.4 2.4 0 0 1 .9 12.2V8.8A2.4 2.4 0 0 1 3.3 6.4h14.4a2.4 2.4 0 0 1 2.4 2.4v3.4a2.4 2.4 0 0 1-2.4 2.4H15M6 10.6h9V19H6Z" stroke="#fff" stroke-width="1.9" fill="none" stroke-linejoin="miter"/></svg>
<svg class="b" style="left:2405.0px;top:837.67px;" width="18" height="10.5" viewBox="0 0 18 10.5"><path d="M0.8 0.8L9.0 9.5L17.2 0.8" stroke="#fff" stroke-width="2.3" fill="none" stroke-linecap="round" stroke-linejoin="miter"/></svg>
<div class="b " style="left:49px;top:945px;width:2410px;height:1px;background:#4a505e;"></div>
<svg class="b" style="left:78.8px;top:901.15px;" width="11.4" height="19.2" viewBox="0 0 11.4 19.2"><path d="M1 1L10.4 9.6L1 18.2" stroke="#8794b0" stroke-width="2.3" fill="none" stroke-linecap="round" stroke-linejoin="miter"/></svg>
<span class="t" style="left:132.80px;top:904.16px;font-size:18.6px;color:#fff;">6</span>
<span class="t" style="left:194.40px;top:904.16px;font-size:18.6px;color:#fff;letter-spacing:0.118px;">(5361) HNK Vukovar 1991</span>
<div class="b " style="left:1201px;top:887px;width:46px;height:48px;background:#3da2f5;border-radius:5px;"></div>
<svg class="b" style="left:1214.0px;top:900.05px;" width="21" height="20" viewBox="0 0 21 20"><path d="M15.1 1.7A3 3 0 0 1 19.3 5.9L6.3 18.9H1.3V15.5Z" stroke="#fff" stroke-width="1.9" fill="none" stroke-linejoin="round"/></svg>
<div class="b " style="left:1251px;top:887px;width:46px;height:48px;background:#3da2f5;border-radius:5px;"></div>
<svg class="b" style="left:1263.8px;top:899.75px;" width="21" height="21" viewBox="0 0 21 21"><path d="M0.8 5.6H20.2M6.3 5.6V3.2a1.9 1.9 0 0 1 1.9-1.9h4.6a1.9 1.9 0 0 1 1.9 1.9V5.6M3.3 5.6V17.6a2.2 2.2 0 0 0 2.2 2.2h10a2.2 2.2 0 0 0 2.2-2.2V5.6M8.5 9.5V15.8M12.5 9.5V15.8" stroke="#fff" stroke-width="1.9" fill="none" stroke-linecap="butt" stroke-linejoin="round"/></svg>
<div class="b " style="left:1301px;top:887px;width:46px;height:48px;background:#3da2f5;border-radius:5px;"></div>
<svg class="b" style="left:1313.7px;top:902.05px;" width="21.2" height="17.2" viewBox="0 0 21.2 17.2"><path fill-rule="evenodd" fill="#fff" d="M1.5 0h18.2a1.5 1.5 0 0 1 1.5 1.5v14.2a1.5 1.5 0 0 1-1.5 1.5H1.5A1.5 1.5 0 0 1 0 15.7V1.5A1.5 1.5 0 0 1 1.5 0ZM3.2 5.5h6.1v2.7H3.2ZM12 5.5h6.1v2.7H12ZM3.2 11.5h6.1v2.8H3.2ZM12 11.5h6.1v2.8H12Z"/></svg>
<div class="b " style="left:1383px;top:895.05px;width:77px;height:35px;background:#2a9d8f;border-radius:6px;"></div>
<span class="t" style="left:1394.20px;top:905.44px;font-size:16.4px;color:#fff;font-weight:700;letter-spacing:-0.768px;">ACTIVE</span>
<div class="b " style="left:1497px;top:887px;width:46px;height:48px;background:#3da2f5;border-radius:5px;"></div>
<svg class="b" style="left:1511px;top:899.8499999999999px;" width="18" height="20" viewBox="0 0 18 20"><path d="M3.3 3.2h11.4a2.4 2.4 0 0 1 2.4 2.4v11a2.4 2.4 0 0 1-2.4 2.4H3.3A2.4 2.4 0 0 1 .9 16.6v-11A2.4 2.4 0 0 1 3.3 3.2ZM.9 8.4H17.1M5.6 0.3V5.4M12.4 0.3V5.4" stroke="#fff" stroke-width="1.8" fill="none"/></svg>
<div class="b " style="left:1547px;top:887px;width:46px;height:48px;background:#3da2f5;border-radius:5px;"></div>
<svg class="b" style="left:1561.0px;top:907.1999999999999px;" width="18" height="10.5" viewBox="0 0 18 10.5"><path d="M0.8 0.8L9.0 9.5L17.2 0.8" stroke="#fff" stroke-width="2.3" fill="none" stroke-linecap="round" stroke-linejoin="miter"/></svg>
<div class="b " style="left:1636px;top:887px;width:46px;height:48px;background:#3da2f5;border-radius:5px;"></div>
<svg class="b" style="left:1649.0px;top:900.1499999999999px;" width="20.4" height="20.4" viewBox="0 0 20.4 20.4"><path d="M10.2 0V20.4M0 10.2H20.4" stroke="#fff" stroke-width="2.4" fill="none"/></svg>
<div class="b " style="left:1668.7px;top:879.05px;width:29.4px;height:30px;background:#2096d6;border-radius:15px;"></div>
<span class="t" style="left:1677.62px;top:885.97px;font-size:19px;color:#fff;font-weight:700;transform:scaleX(1.13);">0</span>
<div class="b " style="left:1749px;top:887px;width:46px;height:48px;background:#3da2f5;border-radius:5px;"></div>
<svg class="b" style="left:1762.3px;top:900.1499999999999px;" width="20.4" height="20.4" viewBox="0 0 20.4 20.4"><path d="M10.2 0V20.4M0 10.2H20.4" stroke="#fff" stroke-width="2.4" fill="none"/></svg>
<div class="b " style="left:1782.8px;top:879.05px;width:29.4px;height:30px;background:#2096d6;border-radius:15px;"></div>
<span class="t" style="left:1791.72px;top:885.97px;font-size:19px;color:#fff;font-weight:700;transform:scaleX(1.13);">0</span>
<span class="t" style="left:1855.70px;top:904.16px;font-size:18.6px;color:#fff;letter-spacing:0.237px;">Stadion Cibalia (Vinkovci)</span>
<div class="b " style="left:2221px;top:887px;width:46px;height:48px;background:#3da2f5;border-radius:5px;"></div>
<svg class="b" style="left:2233.8px;top:900.05px;" width="21" height="20" viewBox="0 0 21 20"><path d="M15.1 1.7A3 3 0 0 1 19.3 5.9L6.3 18.9H1.3V15.5Z" stroke="#fff" stroke-width="1.9" fill="none" stroke-linejoin="round"/></svg>
<div class="b " style="left:2310px;top:887px;width:46px;height:48px;background:#3da2f5;border-radius:5px;"></div>
<svg class="b" style="left:2324.7px;top:900.25px;" width="17" height="20" viewBox="0 0 17 20"><path d="M6.2 1h5.2l4.6 4.6v8a1.8 1.8 0 0 1-1.8 1.8H6.2A1.8 1.8 0 0 1 4.4 13.6V2.8A1.8 1.8 0 0 1 6.2 1ZM11 1v3.4a1.4 1.4 0 0 0 1.4 1.4H16M4.4 4.4H2.8A1.8 1.8 0 0 0 1 6.2V17.2A1.8 1.8 0 0 0 2.8 19H10.6a1.8 1.8 0 0 0 1.8-1.8V15.4" stroke="#fff" stroke-width="1.8" fill="none" stroke-linejoin="round"/></svg>
<div class="b " style="left:2360px;top:887px;width:78px;height:48px;background:#3da2f5;border-radius:5px;"></div>
<svg class="b" style="left:2372.9px;top:901.3499999999999px;" width="21" height="20" viewBox="0 0 21 20"><path d="M6 6.4V1h9v5.4M6 14.6H3.3A2.4 2.4 0 0 1 .9 12.2V8.8A2.4 2.4 0 0 1 3.3 6.4h14.4a2.4 2.4 0 0 1 2.4 2.4v3.4a2.4 2.4 0 0 1-2.4 2.4H15M6 10.6h9V19H6Z" stroke="#fff" stroke-width="1.9" fill="none" stroke-linejoin="miter"/></svg>
<svg class="b" style="left:2405.0px;top:907.0999999999999px;" width="18" height="10.5" viewBox="0 0 18 10.5"><path d="M0.8 0.8L9.0 9.5L17.2 0.8" stroke="#fff" stroke-width="2.3" fill="none" stroke-linecap="round" stroke-linejoin="miter"/></svg>
<div class="b " style="left:49px;top:1014px;width:2410px;height:1px;background:#4a505e;"></div>
<svg class="b" style="left:78.8px;top:970.58px;" width="11.4" height="19.2" viewBox="0 0 11.4 19.2"><path d="M1 1L10.4 9.6L1 18.2" stroke="#8794b0" stroke-width="2.3" fill="none" stroke-linecap="round" stroke-linejoin="miter"/></svg>
<span class="t" style="left:132.80px;top:972.59px;font-size:18.6px;color:#fff;">7</span>
<span class="t" style="left:194.40px;top:972.59px;font-size:18.6px;color:#fff;letter-spacing:0.015px;">(1534) NK Istra 1961</span>
<div class="b " style="left:1201px;top:956px;width:46px;height:48px;background:#3da2f5;border-radius:5px;"></div>
<svg class="b" style="left:1214.0px;top:969.48px;" width="21" height="20" viewBox="0 0 21 20"><path d="M15.1 1.7A3 3 0 0 1 19.3 5.9L6.3 18.9H1.3V15.5Z" stroke="#fff" stroke-width="1.9" fill="none" stroke-linejoin="round"/></svg>
<div class="b " style="left:1251px;top:956px;width:46px;height:48px;background:#3da2f5;border-radius:5px;"></div>
<svg class="b" style="left:1263.8px;top:969.1800000000001px;" width="21" height="21" viewBox="0 0 21 21"><path d="M0.8 5.6H20.2M6.3 5.6V3.2a1.9 1.9 0 0 1 1.9-1.9h4.6a1.9 1.9 0 0 1 1.9 1.9V5.6M3.3 5.6V17.6a2.2 2.2 0 0 0 2.2 2.2h10a2.2 2.2 0 0 0 2.2-2.2V5.6M8.5 9.5V15.8M12.5 9.5V15.8" stroke="#fff" stroke-width="1.9" fill="none" stroke-linecap="butt" stroke-linejoin="round"/></svg>
<div class="b " style="left:1301px;top:956px;width:46px;height:48px;background:#3da2f5;border-radius:5px;"></div>
<svg class="b" style="left:1313.7px;top:971.48px;" width="21.2" height="17.2" viewBox="0 0 21.2 17.2"><path fill-rule="evenodd" fill="#fff" d="M1.5 0h18.2a1.5 1.5 0 0 1 1.5 1.5v14.2a1.5 1.5 0 0 1-1.5 1.5H1.5A1.5 1.5 0 0 1 0 15.7V1.5A1.5 1.5 0 0 1 1.5 0ZM3.2 5.5h6.1v2.7H3.2ZM12 5.5h6.1v2.7H12ZM3.2 11.5h6.1v2.8H3.2ZM12 11.5h6.1v2.8H12Z"/></svg>
<div class="b " style="left:1383px;top:964.48px;width:77px;height:35px;background:#2a9d8f;border-radius:6px;"></div>
<span class="t" style="left:1394.20px;top:974.87px;font-size:16.4px;color:#fff;font-weight:700;letter-spacing:-0.768px;">ACTIVE</span>
<div class="b " style="left:1497px;top:956px;width:46px;height:48px;background:#3da2f5;border-radius:5px;"></div>
<svg class="b" style="left:1511px;top:969.28px;" width="18" height="20" viewBox="0 0 18 20"><path d="M3.3 3.2h11.4a2.4 2.4 0 0 1 2.4 2.4v11a2.4 2.4 0 0 1-2.4 2.4H3.3A2.4 2.4 0 0 1 .9 16.6v-11A2.4 2.4 0 0 1 3.3 3.2ZM.9 8.4H17.1M5.6 0.3V5.4M12.4 0.3V5.4" stroke="#fff" stroke-width="1.8" fill="none"/></svg>
<div class="b " style="left:1547px;top:956px;width:46px;height:48px;background:#3da2f5;border-radius:5px;"></div>
<svg class="b" style="left:1561.0px;top:976.63px;" width="18" height="10.5" viewBox="0 0 18 10.5"><path d="M0.8 0.8L9.0 9.5L17.2 0.8" stroke="#fff" stroke-width="2.3" fill="none" stroke-linecap="round" stroke-linejoin="miter"/></svg>
<div class="b " style="left:1636px;top:956px;width:46px;height:48px;background:#3da2f5;border-radius:5px;"></div>
<svg class="b" style="left:1649.0px;top:969.5799999999999px;" width="20.4" height="20.4" viewBox="0 0 20.4 20.4"><path d="M10.2 0V20.4M0 10.2H20.4" stroke="#fff" stroke-width="2.4" fill="none"/></svg>
<div class="b " style="left:1668.7px;top:948.48px;width:29.4px;height:30px;background:#2096d6;border-radius:15px;"></div>
<span class="t" style="left:1677.62px;top:955.40px;font-size:19px;color:#fff;font-weight:700;transform:scaleX(1.13);">0</span>
<div class="b " style="left:1749px;top:956px;width:46px;height:48px;background:#3da2f5;border-radius:5px;"></div>
<svg class="b" style="left:1762.3px;top:969.5799999999999px;" width="20.4" height="20.4" viewBox="0 0 20.4 20.4"><path d="M10.2 0V20.4M0 10.2H20.4" stroke="#fff" stroke-width="2.4" fill="none"/></svg>
<div class="b " style="left:1782.8px;top:948.48px;width:29.4px;height:30px;background:#2096d6;border-radius:15px;"></div>
<span class="t" style="left:1791.72px;top:955.40px;font-size:19px;color:#fff;font-weight:700;transform:scaleX(1.13);">0</span>
<div class="b " style="left:2221px;top:956px;width:46px;height:48px;background:#3da2f5;border-radius:5px;"></div>
<svg class="b" style="left:2233.8px;top:969.48px;" width="20.4" height="20.4" viewBox="0 0 20.4 20.4"><path d="M10.2 0V20.4M0 10.2H20.4" stroke="#fff" stroke-width="2.4" fill="none"/></svg>
<div class="b " style="left:2310px;top:956px;width:46px;height:48px;background:#3da2f5;border-radius:5px;"></div>
<svg class="b" style="left:2324.7px;top:969.6800000000001px;" width="17" height="20" viewBox="0 0 17 20"><path d="M6.2 1h5.2l4.6 4.6v8a1.8 1.8 0 0 1-1.8 1.8H6.2A1.8 1.8 0 0 1 4.4 13.6V2.8A1.8 1.8 0 0 1 6.2 1ZM11 1v3.4a1.4 1.4 0 0 0 1.4 1.4H16M4.4 4.4H2.8A1.8 1.8 0 0 0 1 6.2V17.2A1.8 1.8 0 0 0 2.8 19H10.6a1.8 1.8 0 0 0 1.8-1.8V15.4" stroke="#fff" stroke-width="1.8" fill="none" stroke-linejoin="round"/></svg>
<div class="b " style="left:2360px;top:956px;width:78px;height:48px;background:#3da2f5;border-radius:5px;"></div>
<svg class="b" style="left:2372.9px;top:970.78px;" width="21" height="20" viewBox="0 0 21 20"><path d="M6 6.4V1h9v5.4M6 14.6H3.3A2.4 2.4 0 0 1 .9 12.2V8.8A2.4 2.4 0 0 1 3.3 6.4h14.4a2.4 2.4 0 0 1 2.4 2.4v3.4a2.4 2.4 0 0 1-2.4 2.4H15M6 10.6h9V19H6Z" stroke="#fff" stroke-width="1.9" fill="none" stroke-linejoin="miter"/></svg>
<svg class="b" style="left:2405.0px;top:976.53px;" width="18" height="10.5" viewBox="0 0 18 10.5"><path d="M0.8 0.8L9.0 9.5L17.2 0.8" stroke="#fff" stroke-width="2.3" fill="none" stroke-linecap="round" stroke-linejoin="miter"/></svg>
<div class="b " style="left:49px;top:1084px;width:2410px;height:1px;background:#4a505e;"></div>
<svg class="b" style="left:78.8px;top:1040.0100000000002px;" width="11.4" height="19.2" viewBox="0 0 11.4 19.2"><path d="M1 1L10.4 9.6L1 18.2" stroke="#8794b0" stroke-width="2.3" fill="none" stroke-linecap="round" stroke-linejoin="miter"/></svg>
<span class="t" style="left:132.80px;top:1043.02px;font-size:18.6px;color:#fff;">8</span>
<span class="t" style="left:194.40px;top:1043.02px;font-size:18.6px;color:#fff;letter-spacing:-0.002px;">(1274) HNK Gorica s.d.d.</span>
<div class="b " style="left:1201px;top:1026px;width:46px;height:47px;background:#3da2f5;border-radius:5px;"></div>
<svg class="b" style="left:1214.0px;top:1038.91px;" width="21" height="20" viewBox="0 0 21 20"><path d="M15.1 1.7A3 3 0 0 1 19.3 5.9L6.3 18.9H1.3V15.5Z" stroke="#fff" stroke-width="1.9" fill="none" stroke-linejoin="round"/></svg>
<div class="b " style="left:1251px;top:1026px;width:46px;height:47px;background:#3da2f5;border-radius:5px;"></div>
<svg class="b" style="left:1263.8px;top:1038.6100000000001px;" width="21" height="21" viewBox="0 0 21 21"><path d="M0.8 5.6H20.2M6.3 5.6V3.2a1.9 1.9 0 0 1 1.9-1.9h4.6a1.9 1.9 0 0 1 1.9 1.9V5.6M3.3 5.6V17.6a2.2 2.2 0 0 0 2.2 2.2h10a2.2 2.2 0 0 0 2.2-2.2V5.6M8.5 9.5V15.8M12.5 9.5V15.8" stroke="#fff" stroke-width="1.9" fill="none" stroke-linecap="butt" stroke-linejoin="round"/></svg>
<div class="b " style="left:1301px;top:1026px;width:46px;height:47px;background:#3da2f5;border-radius:5px;"></div>
<svg class="b" style="left:1313.7px;top:1040.91px;" width="21.2" height="17.2" viewBox="0 0 21.2 17.2"><path fill-rule="evenodd" fill="#fff" d="M1.5 0h18.2a1.5 1.5 0 0 1 1.5 1.5v14.2a1.5 1.5 0 0 1-1.5 1.5H1.5A1.5 1.5 0 0 1 0 15.7V1.5A1.5 1.5 0 0 1 1.5 0ZM3.2 5.5h6.1v2.7H3.2ZM12 5.5h6.1v2.7H12ZM3.2 11.5h6.1v2.8H3.2ZM12 11.5h6.1v2.8H12Z"/></svg>
<div class="b " style="left:1383px;top:1033.91px;width:77px;height:35px;background:#2a9d8f;border-radius:6px;"></div>
<span class="t" style="left:1394.20px;top:1044.30px;font-size:16.4px;color:#fff;font-weight:700;letter-spacing:-0.768px;">ACTIVE</span>
<div class="b " style="left:1497px;top:1026px;width:46px;height:47px;background:#3da2f5;border-radius:5px;"></div>
<svg class="b" style="left:1511px;top:1038.71px;" width="18" height="20" viewBox="0 0 18 20"><path d="M3.3 3.2h11.4a2.4 2.4 0 0 1 2.4 2.4v11a2.4 2.4 0 0 1-2.4 2.4H3.3A2.4 2.4 0 0 1 .9 16.6v-11A2.4 2.4 0 0 1 3.3 3.2ZM.9 8.4H17.1M5.6 0.3V5.4M12.4 0.3V5.4" stroke="#fff" stroke-width="1.8" fill="none"/></svg>
<div class="b " style="left:1547px;top:1026px;width:46px;height:47px;background:#3da2f5;border-radius:5px;"></div>
<svg class="b" style="left:1561.0px;top:1046.0600000000002px;" width="18" height="10.5" viewBox="0 0 18 10.5"><path d="M0.8 0.8L9.0 9.5L17.2 0.8" stroke="#fff" stroke-width="2.3" fill="none" stroke-linecap="round" stroke-linejoin="miter"/></svg>
<div class="b " style="left:1636px;top:1026px;width:46px;height:47px;background:#3da2f5;border-radius:5px;"></div>
<svg class="b" style="left:1649.0px;top:1039.01px;" width="20.4" height="20.4" viewBox="0 0 20.4 20.4"><path d="M10.2 0V20.4M0 10.2H20.4" stroke="#fff" stroke-width="2.4" fill="none"/></svg>
<div class="b " style="left:1668.7px;top:1017.9100000000001px;width:29.4px;height:30px;background:#2096d6;border-radius:15px;"></div>
<span class="t" style="left:1677.62px;top:1024.83px;font-size:19px;color:#fff;font-weight:700;transform:scaleX(1.13);">0</span>
<div class="b " style="left:1749px;top:1026px;width:46px;height:47px;background:#3da2f5;border-radius:5px;"></div>
<svg class="b" style="left:1762.3px;top:1039.01px;" width="20.4" height="20.4" viewBox="0 0 20.4 20.4"><path d="M10.2 0V20.4M0 10.2H20.4" stroke="#fff" stroke-width="2.4" fill="none"/></svg>
<div class="b " style="left:1782.8px;top:1017.9100000000001px;width:29.4px;height:30px;background:#2096d6;border-radius:15px;"></div>
<span class="t" style="left:1791.72px;top:1024.83px;font-size:19px;color:#fff;font-weight:700;transform:scaleX(1.13);">0</span>
<div class="b " style="left:2221px;top:1026px;width:46px;height:47px;background:#3da2f5;border-radius:5px;"></div>
<svg class="b" style="left:2233.8px;top:1038.91px;" width="20.4" height="20.4" viewBox="0 0 20.4 20.4"><path d="M10.2 0V20.4M0 10.2H20.4" stroke="#fff" stroke-width="2.4" fill="none"/></svg>
<div class="b " style="left:2310px;top:1026px;width:46px;height:47px;background:#3da2f5;border-radius:5px;"></div>
<svg class="b" style="left:2324.7px;top:1039.1100000000001px;" width="17" height="20" viewBox="0 0 17 20"><path d="M6.2 1h5.2l4.6 4.6v8a1.8 1.8 0 0 1-1.8 1.8H6.2A1.8 1.8 0 0 1 4.4 13.6V2.8A1.8 1.8 0 0 1 6.2 1ZM11 1v3.4a1.4 1.4 0 0 0 1.4 1.4H16M4.4 4.4H2.8A1.8 1.8 0 0 0 1 6.2V17.2A1.8 1.8 0 0 0 2.8 19H10.6a1.8 1.8 0 0 0 1.8-1.8V15.4" stroke="#fff" stroke-width="1.8" fill="none" stroke-linejoin="round"/></svg>
<div class="b " style="left:2360px;top:1026px;width:78px;height:47px;background:#3da2f5;border-radius:5px;"></div>
<svg class="b" style="left:2372.9px;top:1040.21px;" width="21" height="20" viewBox="0 0 21 20"><path d="M6 6.4V1h9v5.4M6 14.6H3.3A2.4 2.4 0 0 1 .9 12.2V8.8A2.4 2.4 0 0 1 3.3 6.4h14.4a2.4 2.4 0 0 1 2.4 2.4v3.4a2.4 2.4 0 0 1-2.4 2.4H15M6 10.6h9V19H6Z" stroke="#fff" stroke-width="1.9" fill="none" stroke-linejoin="miter"/></svg>
<svg class="b" style="left:2405.0px;top:1045.96px;" width="18" height="10.5" viewBox="0 0 18 10.5"><path d="M0.8 0.8L9.0 9.5L17.2 0.8" stroke="#fff" stroke-width="2.3" fill="none" stroke-linecap="round" stroke-linejoin="miter"/></svg>
<div class="b " style="left:49px;top:1153px;width:2410px;height:1px;background:#4a505e;"></div>
<svg class="b" style="left:78.8px;top:1109.4400000000003px;" width="11.4" height="19.2" viewBox="0 0 11.4 19.2"><path d="M1 1L10.4 9.6L1 18.2" stroke="#8794b0" stroke-width="2.3" fill="none" stroke-linecap="round" stroke-linejoin="miter"/></svg>
<span class="t" style="left:132.80px;top:1112.45px;font-size:18.6px;color:#fff;">9</span>
<span class="t" style="left:194.40px;top:1112.45px;font-size:18.6px;color:#fff;letter-spacing:0.046px;">(914) NK Slaven Belupo</span>
<div class="b " style="left:1201px;top:1095px;width:46px;height:48px;background:#3da2f5;border-radius:5px;"></div>
<svg class="b" style="left:1214.0px;top:1108.3400000000001px;" width="21" height="20" viewBox="0 0 21 20"><path d="M15.1 1.7A3 3 0 0 1 19.3 5.9L6.3 18.9H1.3V15.5Z" stroke="#fff" stroke-width="1.9" fill="none" stroke-linejoin="round"/></svg>
<div class="b " style="left:1251px;top:1095px;width:46px;height:48px;background:#3da2f5;border-radius:5px;"></div>
<svg class="b" style="left:1263.8px;top:1108.0400000000002px;" width="21" height="21" viewBox="0 0 21 21"><path d="M0.8 5.6H20.2M6.3 5.6V3.2a1.9 1.9 0 0 1 1.9-1.9h4.6a1.9 1.9 0 0 1 1.9 1.9V5.6M3.3 5.6V17.6a2.2 2.2 0 0 0 2.2 2.2h10a2.2 2.2 0 0 0 2.2-2.2V5.6M8.5 9.5V15.8M12.5 9.5V15.8" stroke="#fff" stroke-width="1.9" fill="none" stroke-linecap="butt" stroke-linejoin="round"/></svg>
<div class="b " style="left:1301px;top:1095px;width:46px;height:48px;background:#3da2f5;border-radius:5px;"></div>
<svg class="b" style="left:1313.7px;top:1110.3400000000001px;" width="21.2" height="17.2" viewBox="0 0 21.2 17.2"><path fill-rule="evenodd" fill="#fff" d="M1.5 0h18.2a1.5 1.5 0 0 1 1.5 1.5v14.2a1.5 1.5 0 0 1-1.5 1.5H1.5A1.5 1.5 0 0 1 0 15.7V1.5A1.5 1.5 0 0 1 1.5 0ZM3.2 5.5h6.1v2.7H3.2ZM12 5.5h6.1v2.7H12ZM3.2 11.5h6.1v2.8H3.2ZM12 11.5h6.1v2.8H12Z"/></svg>
<div class="b " style="left:1383px;top:1103.3400000000001px;width:77px;height:35px;background:#2a9d8f;border-radius:6px;"></div>
<span class="t" style="left:1394.20px;top:1113.73px;font-size:16.4px;color:#fff;font-weight:700;letter-spacing:-0.768px;">ACTIVE</span>
<div class="b " style="left:1497px;top:1095px;width:46px;height:48px;background:#3da2f5;border-radius:5px;"></div>
<svg class="b" style="left:1511px;top:1108.14px;" width="18" height="20" viewBox="0 0 18 20"><path d="M3.3 3.2h11.4a2.4 2.4 0 0 1 2.4 2.4v11a2.4 2.4 0 0 1-2.4 2.4H3.3A2.4 2.4 0 0 1 .9 16.6v-11A2.4 2.4 0 0 1 3.3 3.2ZM.9 8.4H17.1M5.6 0.3V5.4M12.4 0.3V5.4" stroke="#fff" stroke-width="1.8" fill="none"/></svg>
<div class="b " style="left:1547px;top:1095px;width:46px;height:48px;background:#3da2f5;border-radius:5px;"></div>
<svg class="b" style="left:1561.0px;top:1115.4900000000002px;" width="18" height="10.5" viewBox="0 0 18 10.5"><path d="M0.8 0.8L9.0 9.5L17.2 0.8" stroke="#fff" stroke-width="2.3" fill="none" stroke-linecap="round" stroke-linejoin="miter"/></svg>
<div class="b " style="left:1636px;top:1095px;width:46px;height:48px;background:#3da2f5;border-radius:5px;"></div>
<svg class="b" style="left:1649.0px;top:1108.44px;" width="20.4" height="20.4" viewBox="0 0 20.4 20.4"><path d="M10.2 0V20.4M0 10.2H20.4" stroke="#fff" stroke-width="2.4" fill="none"/></svg>
<div class="b " style="left:1668.7px;top:1087.3400000000001px;width:29.4px;height:30px;background:#2096d6;border-radius:15px;"></div>
<span class="t" style="left:1677.62px;top:1094.26px;font-size:19px;color:#fff;font-weight:700;transform:scaleX(1.13);">0</span>
<div class="b " style="left:1749px;top:1095px;width:46px;height:48px;background:#3da2f5;border-radius:5px;"></div>
<svg class="b" style="left:1762.3px;top:1108.44px;" width="20.4" height="20.4" viewBox="0 0 20.4 20.4"><path d="M10.2 0V20.4M0 10.2H20.4" stroke="#fff" stroke-width="2.4" fill="none"/></svg>
<div class="b " style="left:1782.8px;top:1087.3400000000001px;width:29.4px;height:30px;background:#2096d6;border-radius:15px;"></div>
<span class="t" style="left:1791.72px;top:1094.26px;font-size:19px;color:#fff;font-weight:700;transform:scaleX(1.13);">0</span>
<div class="b " style="left:2221px;top:1095px;width:46px;height:48px;background:#3da2f5;border-radius:5px;"></div>
<svg class="b" style="left:2233.8px;top:1108.3400000000001px;" width="20.4" height="20.4" viewBox="0 0 20.4 20.4"><path d="M10.2 0V20.4M0 10.2H20.4" stroke="#fff" stroke-width="2.4" fill="none"/></svg>
<div class="b " style="left:2310px;top:1095px;width:46px;height:48px;background:#3da2f5;border-radius:5px;"></div>
<svg class="b" style="left:2324.7px;top:1108.5400000000002px;" width="17" height="20" viewBox="0 0 17 20"><path d="M6.2 1h5.2l4.6 4.6v8a1.8 1.8 0 0 1-1.8 1.8H6.2A1.8 1.8 0 0 1 4.4 13.6V2.8A1.8 1.8 0 0 1 6.2 1ZM11 1v3.4a1.4 1.4 0 0 0 1.4 1.4H16M4.4 4.4H2.8A1.8 1.8 0 0 0 1 6.2V17.2A1.8 1.8 0 0 0 2.8 19H10.6a1.8 1.8 0 0 0 1.8-1.8V15.4" stroke="#fff" stroke-width="1.8" fill="none" stroke-linejoin="round"/></svg>
<div class="b " style="left:2360px;top:1095px;width:78px;height:48px;background:#3da2f5;border-radius:5px;"></div>
<svg class="b" style="left:2372.9px;top:1109.64px;" width="21" height="20" viewBox="0 0 21 20"><path d="M6 6.4V1h9v5.4M6 14.6H3.3A2.4 2.4 0 0 1 .9 12.2V8.8A2.4 2.4 0 0 1 3.3 6.4h14.4a2.4 2.4 0 0 1 2.4 2.4v3.4a2.4 2.4 0 0 1-2.4 2.4H15M6 10.6h9V19H6Z" stroke="#fff" stroke-width="1.9" fill="none" stroke-linejoin="miter"/></svg>
<svg class="b" style="left:2405.0px;top:1115.39px;" width="18" height="10.5" viewBox="0 0 18 10.5"><path d="M0.8 0.8L9.0 9.5L17.2 0.8" stroke="#fff" stroke-width="2.3" fill="none" stroke-linecap="round" stroke-linejoin="miter"/></svg>
<svg class="b" style="left:78.8px;top:1178.2700000000002px;" width="11.4" height="19.2" viewBox="0 0 11.4 19.2"><path d="M1 1L10.4 9.6L1 18.2" stroke="#8794b0" stroke-width="2.3" fill="none" stroke-linecap="round" stroke-linejoin="miter"/></svg>
<span class="t" style="left:132.80px;top:1181.28px;font-size:18.6px;color:#fff;">10</span>
<span class="t" style="left:194.40px;top:1181.28px;font-size:18.6px;color:#fff;letter-spacing:0.124px;">(609) GNK Dinamo</span>
<div class="b " style="left:1201px;top:1165px;width:46px;height:47px;background:#3da2f5;border-radius:5px;"></div>
<svg class="b" style="left:1214.0px;top:1177.17px;" width="21" height="20" viewBox="0 0 21 20"><path d="M15.1 1.7A3 3 0 0 1 19.3 5.9L6.3 18.9H1.3V15.5Z" stroke="#fff" stroke-width="1.9" fill="none" stroke-linejoin="round"/></svg>
<div class="b " style="left:1251px;top:1165px;width:46px;height:47px;background:#3da2f5;border-radius:5px;"></div>
<svg class="b" style="left:1263.8px;top:1176.8700000000001px;" width="21" height="21" viewBox="0 0 21 21"><path d="M0.8 5.6H20.2M6.3 5.6V3.2a1.9 1.9 0 0 1 1.9-1.9h4.6a1.9 1.9 0 0 1 1.9 1.9V5.6M3.3 5.6V17.6a2.2 2.2 0 0 0 2.2 2.2h10a2.2 2.2 0 0 0 2.2-2.2V5.6M8.5 9.5V15.8M12.5 9.5V15.8" stroke="#fff" stroke-width="1.9" fill="none" stroke-linecap="butt" stroke-linejoin="round"/></svg>
<div class="b " style="left:1301px;top:1165px;width:46px;height:47px;background:#3da2f5;border-radius:5px;"></div>
<svg class="b" style="left:1313.7px;top:1179.17px;" width="21.2" height="17.2" viewBox="0 0 21.2 17.2"><path fill-rule="evenodd" fill="#fff" d="M1.5 0h18.2a1.5 1.5 0 0 1 1.5 1.5v14.2a1.5 1.5 0 0 1-1.5 1.5H1.5A1.5 1.5 0 0 1 0 15.7V1.5A1.5 1.5 0 0 1 1.5 0ZM3.2 5.5h6.1v2.7H3.2ZM12 5.5h6.1v2.7H12ZM3.2 11.5h6.1v2.8H3.2ZM12 11.5h6.1v2.8H12Z"/></svg>
<div class="b " style="left:1383px;top:1172.17px;width:77px;height:35px;background:#2a9d8f;border-radius:6px;"></div>
<span class="t" style="left:1394.20px;top:1182.56px;font-size:16.4px;color:#fff;font-weight:700;letter-spacing:-0.768px;">ACTIVE</span>
<div class="b " style="left:1497px;top:1165px;width:46px;height:47px;background:#3da2f5;border-radius:5px;"></div>
<svg class="b" style="left:1511px;top:1176.97px;" width="18" height="20" viewBox="0 0 18 20"><path d="M3.3 3.2h11.4a2.4 2.4 0 0 1 2.4 2.4v11a2.4 2.4 0 0 1-2.4 2.4H3.3A2.4 2.4 0 0 1 .9 16.6v-11A2.4 2.4 0 0 1 3.3 3.2ZM.9 8.4H17.1M5.6 0.3V5.4M12.4 0.3V5.4" stroke="#fff" stroke-width="1.8" fill="none"/></svg>
<div class="b " style="left:1547px;top:1165px;width:46px;height:47px;background:#3da2f5;border-radius:5px;"></div>
<svg class="b" style="left:1561.0px;top:1184.3200000000002px;" width="18" height="10.5" viewBox="0 0 18 10.5"><path d="M0.8 0.8L9.0 9.5L17.2 0.8" stroke="#fff" stroke-width="2.3" fill="none" stroke-linecap="round" stroke-linejoin="miter"/></svg>
<div class="b " style="left:1636px;top:1165px;width:46px;height:47px;background:#3da2f5;border-radius:5px;"></div>
<svg class="b" style="left:1649.0px;top:1177.27px;" width="20.4" height="20.4" viewBox="0 0 20.4 20.4"><path d="M10.2 0V20.4M0 10.2H20.4" stroke="#fff" stroke-width="2.4" fill="none"/></svg>
<div class="b " style="left:1668.7px;top:1156.17px;width:29.4px;height:30px;background:#2096d6;border-radius:15px;"></div>
<span class="t" style="left:1677.62px;top:1163.09px;font-size:19px;color:#fff;font-weight:700;transform:scaleX(1.13);">0</span>
<div class="b " style="left:1749px;top:1165px;width:46px;height:47px;background:#3da2f5;border-radius:5px;"></div>
<svg class="b" style="left:1762.3px;top:1177.27px;" width="20.4" height="20.4" viewBox="0 0 20.4 20.4"><path d="M10.2 0V20.4M0 10.2H20.4" stroke="#fff" stroke-width="2.4" fill="none"/></svg>
<div class="b " style="left:1782.8px;top:1156.17px;width:29.4px;height:30px;background:#2096d6;border-radius:15px;"></div>
<span class="t" style="left:1791.72px;top:1163.09px;font-size:19px;color:#fff;font-weight:700;transform:scaleX(1.13);">0</span>
<div class="b " style="left:2221px;top:1165px;width:46px;height:47px;background:#3da2f5;border-radius:5px;"></div>
<svg class="b" style="left:2233.8px;top:1177.17px;" width="20.4" height="20.4" viewBox="0 0 20.4 20.4"><path d="M10.2 0V20.4M0 10.2H20.4" stroke="#fff" stroke-width="2.4" fill="none"/></svg>
<div class="b " style="left:2310px;top:1165px;width:46px;height:47px;background:#3da2f5;border-radius:5px;"></div>
<svg class="b" style="left:2324.7px;top:1177.3700000000001px;" width="17" height="20" viewBox="0 0 17 20"><path d="M6.2 1h5.2l4.6 4.6v8a1.8 1.8 0 0 1-1.8 1.8H6.2A1.8 1.8 0 0 1 4.4 13.6V2.8A1.8 1.8 0 0 1 6.2 1ZM11 1v3.4a1.4 1.4 0 0 0 1.4 1.4H16M4.4 4.4H2.8A1.8 1.8 0 0 0 1 6.2V17.2A1.8 1.8 0 0 0 2.8 19H10.6a1.8 1.8 0 0 0 1.8-1.8V15.4" stroke="#fff" stroke-width="1.8" fill="none" stroke-linejoin="round"/></svg>
<div class="b " style="left:2360px;top:1165px;width:78px;height:47px;background:#3da2f5;border-radius:5px;"></div>
<svg class="b" style="left:2372.9px;top:1178.47px;" width="21" height="20" viewBox="0 0 21 20"><path d="M6 6.4V1h9v5.4M6 14.6H3.3A2.4 2.4 0 0 1 .9 12.2V8.8A2.4 2.4 0 0 1 3.3 6.4h14.4a2.4 2.4 0 0 1 2.4 2.4v3.4a2.4 2.4 0 0 1-2.4 2.4H15M6 10.6h9V19H6Z" stroke="#fff" stroke-width="1.9" fill="none" stroke-linejoin="miter"/></svg>
<svg class="b" style="left:2405.0px;top:1184.22px;" width="18" height="10.5" viewBox="0 0 18 10.5"><path d="M0.8 0.8L9.0 9.5L17.2 0.8" stroke="#fff" stroke-width="2.3" fill="none" stroke-linecap="round" stroke-linejoin="miter"/></svg>
<div class="b " style="left:49px;top:1222.3px;width:2410px;height:2.2px;background:#5b6170;"></div>
<div class="b " style="left:1728px;top:526px;width:94px;height:77px;border:5px solid #ee1c25;"></div>
<span class="t" style="left:1825.40px;top:1261.00px;font-size:17.6px;color:#9ca5b6;letter-spacing:-0.177px;">Items per page:</span>
<div class="b " style="left:1955.2px;top:1245px;width:77.8px;height:44.8px;background:#3b404e;border-radius:6px;border:1px solid #4d5364;"></div>
<span class="t" style="left:1966.90px;top:1261.00px;font-size:17.6px;color:#fff;letter-spacing:-0.939px;">10</span>
<svg class="b" style="left:2003.8px;top:1262.4px;" width="16.8" height="9.6" viewBox="0 0 16.8 9.6"><path d="M0.8 0.8L8.4 8.6L16.0 0.8" stroke="#e8eaf0" stroke-width="1.7" fill="none" stroke-linecap="round" stroke-linejoin="miter"/></svg>
<span class="t" style="left:2062.10px;top:1261.00px;font-size:17.6px;color:#9ca5b6;letter-spacing:-0.136px;">1 - 10 of 10 results</span>
<svg class="b" style="left:2239.8px;top:1261.0px;" width="13.2" height="10.4" viewBox="0 0 13.2 10.4"><path d="M5.9 0.7L1.3 5.2 5.9 9.7M12.5 0.7L7.9 5.2 12.5 9.7" stroke="#7c879b" stroke-width="2" fill="none"/></svg>
<svg class="b" style="left:2286.8px;top:1259.8999999999999px;" width="8.4" height="12.8" viewBox="0 0 8.4 12.8"><path d="M7.4 0.8L1.6 6.4 7.4 12" stroke="#7c879b" stroke-width="2.1" fill="none"/></svg>
<div class="b " style="left:2316.9px;top:1246.9px;width:40.3px;height:40.3px;background:#3da2f5;border-radius:6px;"></div>
<svg class="b" style="left:2333.4px;top:1262.8px;" width="6.2" height="13.6" viewBox="0 0 6.2 13.6"><path d="M0.6 4.6L5.1 1.2V13.6" stroke="#fff" stroke-width="1.9" fill="none" stroke-linejoin="miter"/></svg>
<svg class="b" style="left:2378.7000000000003px;top:1259.8999999999999px;" width="8.4" height="12.8" viewBox="0 0 8.4 12.8"><path d="M1 0.8L6.8 6.4 1 12" stroke="#7c879b" stroke-width="2.1" fill="none"/></svg>
<svg class="b" style="left:2420.8px;top:1261.0px;" width="13.2" height="10.4" viewBox="0 0 13.2 10.4"><path d="M0.7 0.7L5.3 5.2 0.7 9.7M7.3 0.7L11.9 5.2 7.3 9.7" stroke="#7c879b" stroke-width="2" fill="none"/></svg>
<div class="b " style="left:480px;top:186px;width:1200px;height:868.5px;background:#161a26;border-radius:6px;box-shadow:0 28px 64px -12px rgba(0,0,0,0.47);"></div>
<span class="t" style="left:507.10px;top:215.91px;font-size:22.9px;color:#fff;font-weight:700;letter-spacing:-0.268px;">Person</span>
<svg class="b" style="left:1631.9px;top:215.3px;" width="18.2" height="18.2" viewBox="0 0 18.2 18.2"><path d="M0.8 0.8L17.4 17.4M17.4 0.8L0.8 17.4" stroke="#a4b4cd" stroke-width="2" fill="none"/></svg>
<div class="b " style="left:480px;top:264px;width:1200px;height:1.1px;background:#343844;"></div>
<div class="b " style="left:1545px;top:299px;width:46px;height:48px;background:#607d8b;border-radius:5px;"></div>
<div class="b " style="left:1596px;top:299px;width:46px;height:48px;background:#607d8b;border-radius:5px;"></div>
<svg class="b" style="left:1560px;top:311.90000000000003px;" width="16" height="20.4" viewBox="0 0 16 20.4"><path d="M3.3 1.1H8.7L14.9 7.3V17.1a2.2 2.2 0 0 1-2.2 2.2H3.3A2.2 2.2 0 0 1 1.1 17.1V3.3A2.2 2.2 0 0 1 3.3 1.1ZM8.5 1.3V7.5H14.7" stroke="#fff" stroke-width="2.1" fill="none" stroke-linejoin="round"/><path d="M5.3 11.2L10.9 17M10.9 11.2L5.3 17" stroke="#fff" stroke-width="2.3" fill="none"/></svg>
<svg class="b" style="left:1609.0px;top:313.8px;" width="20.2" height="17.6" viewBox="0 0 20.2 17.6"><path fill-rule="evenodd" fill="#fff" d="M1.4 0h17.4a1.4 1.4 0 0 1 1.4 1.4v14.8a1.4 1.4 0 0 1-1.4 1.4H1.4A1.4 1.4 0 0 1 0 16.2V1.4A1.4 1.4 0 0 1 1.4 0ZM2.8 5.3h5.6v9.7H2.8ZM11.9 5.3h5.6v9.7h-5.6Z"/></svg>
<div class="b " style="left:500px;top:366px;width:1160px;height:4px;background:#10131d;"></div>
<div class="b " style="left:500px;top:370px;width:1160px;height:116px;background:#252935;"></div>
<div class="b " style="left:500px;top:370px;width:246px;height:116px;background:#323642;"></div>
<div class="b " style="left:500px;top:486px;width:1160px;height:1.2px;background:#30343f;"></div>
<span class="t" style="left:514.40px;top:401.37px;font-size:19.5px;color:#fff;font-weight:700;letter-spacing:0.144px;">Name</span>
<svg class="b" style="left:578px;top:398.9px;" width="21" height="21" viewBox="0 0 21 21"><path d="M5 20V1.4M1 5.2L5 1.2 9 5.2M15.6 1V19.6M11.6 15.8L15.6 19.8 19.6 15.8" stroke="#fff" stroke-width="1.75" fill="none"/></svg>
<span class="t" style="left:760.80px;top:401.37px;font-size:19.5px;color:#fff;font-weight:700;letter-spacing:0.210px;">Nationality</span>
<svg class="b" style="left:873px;top:398.9px;" width="21" height="21" viewBox="0 0 21 21"><path d="M5 20V1.4M1 5.2L5 1.2 9 5.2M15.6 1V19.6M11.6 15.8L15.6 19.8 19.6 15.8" stroke="#fff" stroke-width="1.75" fill="none"/></svg>
<span class="t" style="left:1015.40px;top:401.37px;font-size:19.5px;color:#fff;font-weight:700;letter-spacing:0.243px;">Date of birth</span>
<svg class="b" style="left:1144px;top:398.9px;" width="21" height="21" viewBox="0 0 21 21"><path d="M5 20V1.4M1 5.2L5 1.2 9 5.2M15.6 1V19.6M11.6 15.8L15.6 19.8 19.6 15.8" stroke="#fff" stroke-width="1.75" fill="none"/></svg>
<span class="t" style="left:1192.40px;top:401.37px;font-size:19.5px;color:#fff;font-weight:700;letter-spacing:-0.594px;">Place</span>
<span class="t" style="left:1294.40px;top:401.37px;font-size:19.5px;color:#fff;font-weight:700;letter-spacing:-0.775px;">Level</span>
<svg class="b" style="left:1351px;top:398.9px;" width="21" height="21" viewBox="0 0 21 21"><path d="M5 20V1.4M1 5.2L5 1.2 9 5.2M15.6 1V19.6M11.6 15.8L15.6 19.8 19.6 15.8" stroke="#fff" stroke-width="1.75" fill="none"/></svg>
<span class="t" style="left:1441.40px;top:401.37px;font-size:19.5px;color:#fff;font-weight:700;letter-spacing:-0.141px;">Catalogue</span>
<div class="b " style="left:514.7px;top:432.7px;width:217px;height:46.8px;background:#212738;border-radius:6px;border:1px solid #262c3d;"></div>
<span class="t" style="left:524.70px;top:447.23px;font-size:20px;color:#f0f2f6;letter-spacing:-0.551px;">ivan</span>
<div class="b " style="left:761px;top:432px;width:226px;height:47.6px;background:#212738;border-radius:6px;border:1px solid #363c4f;"></div>
<div class="b " style="left:1016px;top:432px;width:148px;height:47.6px;background:#212738;border-radius:6px;border:1px solid #363c4f;"></div>
<div class="b " style="left:1294px;top:432px;width:119px;height:44.8px;background:#212738;border-radius:6px;border:1px solid #363c4f;"></div>
<span class="t" style="left:1304.90px;top:448.00px;font-size:17.4px;color:#e6e9ef;letter-spacing:-0.409px;">Choose</span>
<svg class="b" style="left:1383.6000000000001px;top:449.25px;" width="16.6" height="9.5" viewBox="0 0 16.6 9.5"><path d="M0.8 0.8L8.3 8.5L15.8 0.8" stroke="#e8eaf0" stroke-width="1.7" fill="none" stroke-linecap="round" stroke-linejoin="miter"/></svg>
<div class="b " style="left:1616.1px;top:385.1px;width:29.6px;height:29.2px;background:#252935;border-radius:6px;border:2px solid #393e4b;"></div>
<span class="t" style="left:514.60px;top:508.77px;font-size:19.3px;color:#fff;letter-spacing:-0.314px;">Bar Ivan</span>
<span class="t" style="left:761.10px;top:508.77px;font-size:19.3px;color:#fff;letter-spacing:-0.322px;">Hrvatska</span>
<span class="t" style="left:1016.00px;top:508.77px;font-size:19.3px;color:#fff;letter-spacing:-0.492px;">10.01.2007</span>
<span class="t" style="left:1192.70px;top:508.77px;font-size:19.3px;color:#fff;letter-spacing:0.006px;">Vinkovci</span>
<span class="t" style="left:1294.40px;top:508.77px;font-size:19.3px;color:#fff;letter-spacing:-0.301px;">Professional</span>
<div class="b " style="left:500px;top:547px;width:1160px;height:1px;background:#2b303d;"></div>
<span class="t" style="left:514.60px;top:569.77px;font-size:19.3px;color:#fff;letter-spacing:-0.457px;">Cvija Ivan</span>
<span class="t" style="left:761.10px;top:569.77px;font-size:19.3px;color:#fff;letter-spacing:-0.322px;">Hrvatska</span>
<span class="t" style="left:1016.00px;top:569.77px;font-size:19.3px;color:#fff;letter-spacing:-0.492px;">09.10.2003</span>
<span class="t" style="left:1192.70px;top:569.77px;font-size:19.3px;color:#fff;letter-spacing:-0.149px;">Zagreb</span>
<span class="t" style="left:1294.40px;top:569.77px;font-size:19.3px;color:#fff;letter-spacing:-0.301px;">Professional</span>
<div class="b " style="left:500px;top:608px;width:1160px;height:1px;background:#2b303d;"></div>
<span class="t" style="left:514.60px;top:630.77px;font-size:19.3px;color:#fff;letter-spacing:0.005px;">Ivanko Niko</span>
<span class="t" style="left:761.10px;top:630.77px;font-size:19.3px;color:#fff;letter-spacing:-0.322px;">Hrvatska</span>
<span class="t" style="left:1016.00px;top:630.77px;font-size:19.3px;color:#fff;letter-spacing:-0.492px;">03.12.2008</span>
<span class="t" style="left:1192.70px;top:630.77px;font-size:19.3px;color:#fff;letter-spacing:-0.296px;">Osijek</span>
<span class="t" style="left:1294.40px;top:630.77px;font-size:19.3px;color:#fff;letter-spacing:0.118px;">Amateur</span>
<div class="b " style="left:500px;top:669px;width:1160px;height:1px;background:#2b303d;"></div>
<span class="t" style="left:514.60px;top:691.77px;font-size:19.3px;color:#fff;letter-spacing:-0.153px;">Kolar Ivan</span>
<span class="t" style="left:761.10px;top:691.77px;font-size:19.3px;color:#fff;letter-spacing:-0.322px;">Hrvatska</span>
<span class="t" style="left:1016.00px;top:691.77px;font-size:19.3px;color:#fff;letter-spacing:-0.492px;">18.06.2008</span>
<span class="t" style="left:1192.70px;top:691.77px;font-size:19.3px;color:#fff;letter-spacing:0.006px;">Vinkovci</span>
<span class="t" style="left:1294.40px;top:691.77px;font-size:19.3px;color:#fff;letter-spacing:-0.301px;">Professional</span>
<div class="b " style="left:500px;top:730px;width:1160px;height:1px;background:#2b303d;"></div>
<span class="t" style="left:514.60px;top:752.77px;font-size:19.3px;color:#fff;letter-spacing:-0.255px;">Kolari Ivan</span>
<span class="t" style="left:761.10px;top:752.77px;font-size:19.3px;color:#fff;letter-spacing:-0.322px;">Hrvatska</span>
<span class="t" style="left:1016.00px;top:752.77px;font-size:19.3px;color:#fff;letter-spacing:-0.492px;">20.05.2007</span>
<span class="t" style="left:1192.70px;top:752.77px;font-size:19.3px;color:#fff;letter-spacing:-0.296px;">Osijek</span>
<span class="t" style="left:1294.40px;top:752.77px;font-size:19.3px;color:#fff;letter-spacing:-0.301px;">Professional</span>
<div class="b " style="left:500px;top:791px;width:1160px;height:1px;background:#2b303d;"></div>
<span class="t" style="left:514.60px;top:813.77px;font-size:19.3px;color:#fff;letter-spacing:-0.319px;">Tačkov Ivan</span>
<span class="t" style="left:761.10px;top:813.77px;font-size:19.3px;color:#fff;letter-spacing:-0.322px;">Hrvatska</span>
<span class="t" style="left:1016.00px;top:813.77px;font-size:19.3px;color:#fff;letter-spacing:-0.492px;">08.06.2009</span>
<span class="t" style="left:1192.70px;top:813.77px;font-size:19.3px;color:#fff;letter-spacing:-0.149px;">Zagreb</span>
<span class="t" style="left:1294.40px;top:813.77px;font-size:19.3px;color:#fff;letter-spacing:0.118px;">Amateur</span>
<div class="b " style="left:500px;top:852px;width:1160px;height:1px;background:#2b303d;"></div>
<div class="b " style="left:1616.1px;top:502.6px;width:29.6px;height:29.2px;background:#161a26;border-radius:6px;border:2px solid #393e4b;"></div>
<div class="b " style="left:1594px;top:605.5px;width:62px;height:5px;background:rgba(22,26,38,0.6);"></div>
<div class="b " style="left:1618px;top:569.2px;width:26.4px;height:26px;background:#2196f3;border-radius:5px;border:1.5px solid #0a0d14;"></div>
<svg class="b" style="left:1618px;top:569.2px;" width="26.4" height="26" viewBox="0 0 26.4 26"><path d="M5.9 15.6L10.6 19.3 22.6 9" stroke="#fff" stroke-width="1.6" fill="none"/></svg>
<div class="b " style="left:1618px;top:621.5px;width:26.4px;height:26px;background:#2196f3;border-radius:5px;border:1.5px solid #0a0d14;"></div>
<svg class="b" style="left:1618px;top:621.5px;" width="26.4" height="26" viewBox="0 0 26.4 26"><path d="M5.9 15.6L10.6 19.3 22.6 9" stroke="#fff" stroke-width="1.6" fill="none"/></svg>
<div class="b " style="left:1616.1px;top:685.6px;width:29.6px;height:29.2px;background:#161a26;border-radius:6px;border:2px solid #393e4b;"></div>
<div class="b " style="left:1616.1px;top:746.6px;width:29.6px;height:29.2px;background:#161a26;border-radius:6px;border:2px solid #393e4b;"></div>
<div class="b " style="left:1616.1px;top:807.6px;width:29.6px;height:29.2px;background:#161a26;border-radius:6px;border:2px solid #393e4b;"></div>
<span class="t" style="left:1054.60px;top:890.00px;font-size:17.6px;color:#8894ab;letter-spacing:-0.170px;">Items per page:</span>
<div class="b " style="left:1185.1px;top:874.3px;width:67.9px;height:43.7px;background:#212739;border-radius:6px;border:1px solid #343b4e;"></div>
<span class="t" style="left:1195.70px;top:890.00px;font-size:17.6px;color:#fff;letter-spacing:-0.889px;">10</span>
<svg class="b" style="left:1223.6999999999998px;top:891.6px;" width="16.8" height="9.6" viewBox="0 0 16.8 9.6"><path d="M0.8 0.8L8.4 8.6L16.0 0.8" stroke="#e8eaf0" stroke-width="1.7" fill="none" stroke-linecap="round" stroke-linejoin="miter"/></svg>
<span class="t" style="left:1281.80px;top:890.00px;font-size:17.6px;color:#8894ab;letter-spacing:-0.109px;">1 - 6 of 6 results</span>
<svg class="b" style="left:1440.8000000000002px;top:890.0px;" width="13.2" height="10.4" viewBox="0 0 13.2 10.4"><path d="M5.9 0.7L1.3 5.2 5.9 9.7M12.5 0.7L7.9 5.2 12.5 9.7" stroke="#6b778c" stroke-width="2" fill="none"/></svg>
<svg class="b" style="left:1487.8px;top:888.8000000000001px;" width="8.4" height="12.8" viewBox="0 0 8.4 12.8"><path d="M7.4 0.8L1.6 6.4 7.4 12" stroke="#6b778c" stroke-width="2.1" fill="none"/></svg>
<div class="b " style="left:1517.8px;top:875.8px;width:40.4px;height:40.4px;background:#2196f3;border-radius:6px;"></div>
<svg class="b" style="left:1534.3px;top:891.8px;" width="6.2" height="13.6" viewBox="0 0 6.2 13.6"><path d="M0.6 4.6L5.1 1.2V13.6" stroke="#fff" stroke-width="1.9" fill="none" stroke-linejoin="miter"/></svg>
<svg class="b" style="left:1579.8px;top:888.8000000000001px;" width="8.4" height="12.8" viewBox="0 0 8.4 12.8"><path d="M1 0.8L6.8 6.4 1 12" stroke="#6b778c" stroke-width="2.1" fill="none"/></svg>
<svg class="b" style="left:1622.0px;top:890.0px;" width="13.2" height="10.4" viewBox="0 0 13.2 10.4"><path d="M0.7 0.7L5.3 5.2 0.7 9.7M7.3 0.7L11.9 5.2 7.3 9.7" stroke="#6b778c" stroke-width="2" fill="none"/></svg>
<div class="b " style="left:500px;top:967px;width:1160px;height:1.2px;background:#30343f;"></div>
<div class="b " style="left:500px;top:988px;width:1160px;height:47px;background:#2196f3;border-radius:5px;"></div>
<svg class="b" style="left:515.0px;top:1001.0px;" width="21" height="21" viewBox="0 0 21 21"><path d="M10.5 0V21M0 10.5H21" stroke="#fff" stroke-width="2.1" fill="none"/></svg>
<span class="t" style="left:1032.40px;top:1003.03px;font-size:20px;color:#fff;font-weight:700;letter-spacing:-0.874px;">Add selected</span>
</body></html>
